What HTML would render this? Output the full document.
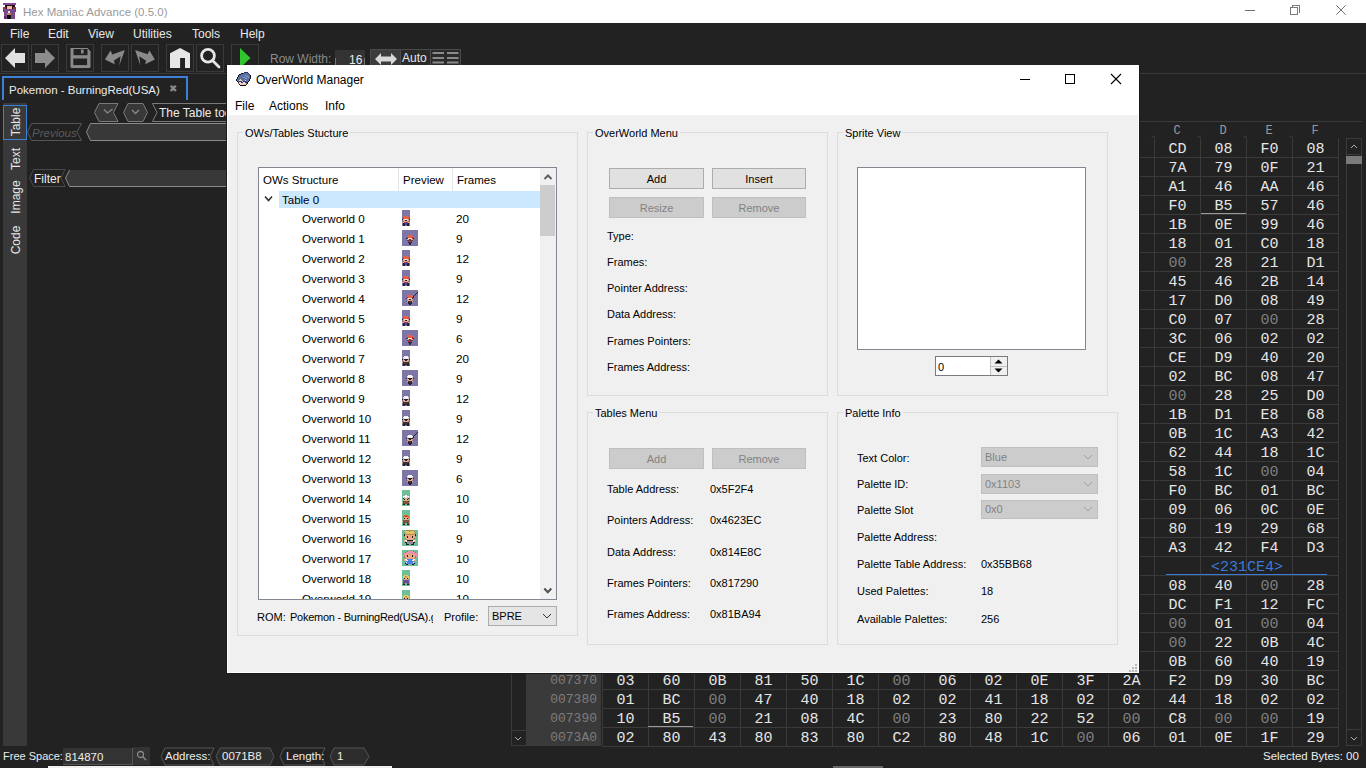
<!DOCTYPE html><html><head><meta charset="utf-8"><style>
html,body{margin:0;padding:0}
body{width:1366px;height:768px;overflow:hidden;position:relative;background:#222222;font-family:'Liberation Sans',sans-serif;font-size:12px}
div,span{box-sizing:border-box}
.hx{position:absolute;font-family:'Liberation Mono',monospace;font-size:15px;color:#e6e6e6;width:46px;text-align:center;height:19px;line-height:19px}
.z{color:#7f7f7f}
.ad{position:absolute;font-family:'Liberation Mono',monospace;font-size:13px;color:#7d7d7d;text-align:right;width:70px;height:19px;line-height:19px}

</style></head><body>
<div style="position:absolute;left:0px;top:0px;width:1366px;height:23px;background:#ffffff"></div>
<svg style="position:absolute;left:0;top:0" width="22" height="22" viewBox="0 0 22 22" shape-rendering="crispEdges">
<rect x="3" y="3" width="13" height="2" fill="#8a4a9a"/><rect x="5" y="5" width="10" height="4" fill="#1a1018"/>
<rect x="7" y="6" width="5" height="3" fill="#f0c0a0"/><rect x="3" y="7" width="3" height="5" fill="#b02848"/>
<rect x="13" y="7" width="3" height="5" fill="#b02848"/><rect x="4" y="9" width="11" height="10" fill="#7a4a8a"/>
<rect x="8" y="11" width="2" height="2" fill="#d8e8f0"/><rect x="7" y="13" width="4" height="2" fill="#c08060"/>
<rect x="7" y="15" width="4" height="4" fill="#101010"/><rect x="4" y="16" width="2" height="3" fill="#5a3068"/>
</svg>
<div style="position:absolute;left:23px;top:4px;height:16px;line-height:16px;white-space:nowrap;font-size:11.5px;color:#9a9a9a">Hex Maniac Advance (0.5.0)</div>
<div style="position:absolute;left:1245px;top:10px;width:10px;height:1px;background:#707070"></div>
<div style="position:absolute;left:1290px;top:7px;width:8px;height:8px;border:1px solid #7a7a7a"></div>
<div style="position:absolute;left:1292px;top:5px;width:8px;height:8px;border-top:1px solid #7a7a7a;border-right:1px solid #7a7a7a"></div>
<div style="position:absolute;left:1292px;top:5px;width:1px;height:2px;background:#7a7a7a"></div>
<svg style="position:absolute;left:1336px;top:5px" width="10" height="10"><path d="M0.3 0.3L9.7 9.7M9.7 0.3L0.3 9.7" stroke="#707070" stroke-width="1"/></svg>
<div style="position:absolute;left:10px;top:26px;height:16px;line-height:16px;white-space:nowrap;font-size:12px;color:#e8e8e8">File</div>
<div style="position:absolute;left:48px;top:26px;height:16px;line-height:16px;white-space:nowrap;font-size:12px;color:#e8e8e8">Edit</div>
<div style="position:absolute;left:88px;top:26px;height:16px;line-height:16px;white-space:nowrap;font-size:12px;color:#e8e8e8">View</div>
<div style="position:absolute;left:133px;top:26px;height:16px;line-height:16px;white-space:nowrap;font-size:12px;color:#e8e8e8">Utilities</div>
<div style="position:absolute;left:192px;top:26px;height:16px;line-height:16px;white-space:nowrap;font-size:12px;color:#e8e8e8">Tools</div>
<div style="position:absolute;left:240px;top:26px;height:16px;line-height:16px;white-space:nowrap;font-size:12px;color:#e8e8e8">Help</div>
<div style="position:absolute;left:1px;top:44px;width:28px;height:28px;border:1px solid #3a3a3a"></div>
<div style="position:absolute;left:31px;top:44px;width:28px;height:28px;border:1px solid #3a3a3a"></div>
<div style="position:absolute;left:66px;top:44px;width:28px;height:28px;border:1px solid #3a3a3a"></div>
<div style="position:absolute;left:101px;top:44px;width:28px;height:28px;border:1px solid #3a3a3a"></div>
<div style="position:absolute;left:131px;top:44px;width:28px;height:28px;border:1px solid #3a3a3a"></div>
<div style="position:absolute;left:166px;top:44px;width:28px;height:28px;border:1px solid #3a3a3a"></div>
<div style="position:absolute;left:196px;top:44px;width:28px;height:28px;border:1px solid #3a3a3a"></div>
<div style="position:absolute;left:231px;top:44px;width:28px;height:28px;border:1px solid #3a3a3a"></div>
<svg style="position:absolute;left:0;top:44px" width="262" height="28" viewBox="0 44 262 28">
<path d="M5 58 L15 48 L15 53 L25 53 L25 63 L15 63 L15 68 Z" fill="#e0e0e0"/>
<path d="M55 58 L45 48 L45 53 L35 53 L35 63 L45 63 L45 68 Z" fill="#8c8c8c"/>
<path d="M70.5 48 L87.5 48 L90.5 51.5 L90.5 66.5 Q90.5 68 89 68 L72 68 Q70.5 68 70.5 66.5 Z" fill="#8a8a8a"/>
<rect x="73.5" y="49" width="14" height="6.2" fill="#222"/><rect x="81" y="49.5" width="2.6" height="4" fill="#8a8a8a"/>
<rect x="73.3" y="58.5" width="13.8" height="6.6" fill="#222"/>
<path d="M105 59.4 L110.5 50.4 L112.3 54.5 L124.8 50.1 L119.3 65.5 L120.6 56.3 L114 60.5 L114.7 64.2 Z" fill="#8a8a8a"/>
<path d="M154.9 59.6 L149.4 50.4 L147.6 54.3 L135.1 50.1 L140.4 65.5 L139.3 56.3 L146.1 60.7 L145.2 64.2 Z" fill="#8a8a8a"/>
<path d="M170 53.2 L180.1 48 L190 53.2 L190 68 L185 68 L185 58 L180.1 58 L180.1 68 L170 68 Z" fill="#e6e6e6"/>
<circle cx="208" cy="55.7" r="6.4" stroke="#e6e6e6" stroke-width="2.8" fill="none"/>
<path d="M212.5 60.5 L219 67" stroke="#e6e6e6" stroke-width="2.8" stroke-linecap="round"/>
<path d="M240 48 L250.5 58 L240 68 Z" fill="#2ec52e"/>
</svg>
<div style="position:absolute;left:270px;top:51px;height:16px;line-height:16px;white-space:nowrap;font-size:12px;color:#8a8a8a">Row Width:</div>
<div style="position:absolute;left:335px;top:50px;width:30px;height:23px;background:#333333"></div>
<div style="position:absolute;left:335px;top:58px;width:1px;height:7px;background:#777"></div>
<div style="position:absolute;left:364px;top:58px;width:1px;height:7px;background:#777"></div>
<div style="position:absolute;left:349px;top:52px;height:16px;line-height:16px;white-space:nowrap;font-size:12px;color:#e8e8e8">16</div>
<div style="position:absolute;left:370px;top:49px;width:91px;height:24px;border:1px solid #4a4a4a;background:#2a2a2a"></div>
<div style="position:absolute;left:371px;top:50px;width:29px;height:23px;background:#3c3c3c"></div>
<div style="position:absolute;left:400px;top:49px;width:1px;height:23px;background:#4a4a4a"></div>
<div style="position:absolute;left:430px;top:49px;width:1px;height:23px;background:#4a4a4a"></div>
<svg style="position:absolute;left:374px;top:51px;" width="24" height="16" viewBox="0 0 24 16"><path d="M1 8 L7 2 L7 5.5 L17 5.5 L17 2 L23 8 L17 14 L17 10.5 L7 10.5 L7 14 Z" fill="#d8d8d8"/></svg>
<div style="position:absolute;left:402px;top:50px;height:16px;line-height:16px;white-space:nowrap;font-size:12px;color:#e8e8e8">Auto</div>
<svg style="position:absolute;left:430px;top:49px;" width="31" height="24" viewBox="0 0 31 24"><path d="M2.5 4H14M2.5 9H14M2.5 13.5H14M17 4H28.5M17 9H28.5M17 13.5H28.5" stroke="#8a8a8a" stroke-width="2"/></svg>
<div style="position:absolute;left:0px;top:73px;width:1366px;height:1px;background:#3a3a3a"></div>
<div style="position:absolute;left:2px;top:76px;width:186px;height:24px;border:2px solid #3b7fd6;border-bottom:none"></div>
<div style="position:absolute;left:9px;top:82px;height:16px;line-height:16px;white-space:nowrap;font-size:11.5px;color:#ececec">Pokemon - BurningRed(USA)</div>
<div style="position:absolute;left:169px;top:81px;height:16px;line-height:16px;white-space:nowrap;font-size:10px;color:#8a8a8a">&#x2716;</div>
<div style="position:absolute;left:189px;top:121px;width:1173px;height:1px;background:#3a3a3a"></div>
<div style="position:absolute;left:3px;top:103px;width:24px;height:643px;background:#393939"></div>
<div style="position:absolute;left:3px;top:105px;width:24px;height:35px;border:1px solid #3b7fd6;background:#3a3a3a"></div>
<div style="position:absolute;left:-24px;top:114px;width:80px;height:16px;line-height:16px;text-align:center;transform:rotate(-90deg);font-size:12px;color:#e6e6e6">Table</div>
<div style="position:absolute;left:-24px;top:151px;width:80px;height:16px;line-height:16px;text-align:center;transform:rotate(-90deg);font-size:12px;color:#e6e6e6">Text</div>
<div style="position:absolute;left:-24px;top:189px;width:80px;height:16px;line-height:16px;text-align:center;transform:rotate(-90deg);font-size:12px;color:#e6e6e6">Image</div>
<div style="position:absolute;left:-24px;top:232px;width:80px;height:16px;line-height:16px;text-align:center;transform:rotate(-90deg);font-size:12px;color:#e6e6e6">Code</div>
<svg style="position:absolute;left:94px;top:103px;" width="26" height="19" viewBox="0 0 26 19"><path d="M5 0.5 L24 0.5 L19.5 9.5 L24 18.5 L5 18.5 L0.5 9.5 Z" fill="#383838" stroke="#7a7a7a"/><path d="M10 6.5 L13.5 10 L18.5 6" stroke="#8a8a8a" stroke-width="1.3" fill="none"/></svg>
<svg style="position:absolute;left:123px;top:103px;" width="26" height="19" viewBox="0 0 26 19"><path d="M5 0.5 L20 0.5 L24.5 9.5 L20 18.5 L5 18.5 L0.5 9.5 Z" fill="#383838" stroke="#7a7a7a"/><path d="M9 7 L12.5 10.5 L16 7" stroke="#8a8a8a" stroke-width="1.3" fill="none"/></svg>
<svg style="position:absolute;left:152px;top:103px;" width="80" height="19" viewBox="0 0 80 19"><path d="M80 0.5 L0.5 0.5 L5 9.5 L0.5 18.5 L80 18.5" fill="#222" stroke="#7a7a7a"/></svg>
<div style="position:absolute;left:159px;top:105px;height:16px;line-height:16px;white-space:nowrap;font-size:12px;color:#ececec">The Table too</div>
<svg style="position:absolute;left:27px;top:123px;" width="56" height="19" viewBox="0 0 56 19"><path d="M4.5 0.5 L54.5 0.5 L50 9 L54.5 17.5 L4.5 17.5 L0.5 9 Z" fill="#222" stroke="#555"/></svg>
<div style="position:absolute;left:32px;top:125px;height:16px;line-height:16px;white-space:nowrap;font-size:11.5px;color:#5a5a5a;font-style:italic">Previous</div>
<svg style="position:absolute;left:86px;top:123px;" width="150" height="19" viewBox="0 0 150 19"><path d="M4.5 0.5 L150 0.5 L150 17.5 L4.5 17.5 L0.5 9 Z" fill="#383838" stroke="#8a8a8a"/></svg>
<svg style="position:absolute;left:29px;top:169px;" width="37" height="19" viewBox="0 0 37 19"><path d="M4.5 0.5 L36 0.5 L32 9 L36 17.5 L4.5 17.5 L0.5 9 Z" fill="#222" stroke="#4a4a4a"/></svg>
<div style="position:absolute;left:34px;top:171px;height:16px;line-height:16px;white-space:nowrap;font-size:12px;color:#ececec">Filter</div>
<svg style="position:absolute;left:65px;top:169px;" width="170" height="19" viewBox="0 0 170 19"><path d="M4.5 1 L170 1 L170 17.5 L4.5 17.5 L0.5 9 Z" fill="#383838"/><path d="M4.5 1 L0.5 9 L4.5 17.5 L170 17.5" fill="none" stroke="#8a8a8a"/></svg>
<div style="position:absolute;left:511px;top:138px;width:16px;height:608px;border:1px solid #3a3a3a;background:#222"></div>
<div style="position:absolute;left:511px;top:730px;width:16px;height:16px;border:1px solid #3a3a3a"></div>
<svg style="position:absolute;left:513px;top:733px;" width="10" height="10" viewBox="0 0 10 10"><path d="M2 4 L5 7 L8 4" stroke="#aaa" fill="none"/></svg>
<div style="position:absolute;left:527px;top:138px;width:74px;height:608px;background:#3a3a3a"></div>
<div style="position:absolute;left:602px;top:157px;width:736px;height:1px;background:#3a3a3a"></div>
<div style="position:absolute;left:602px;top:176px;width:736px;height:1px;background:#3a3a3a"></div>
<div style="position:absolute;left:602px;top:195px;width:736px;height:1px;background:#3a3a3a"></div>
<div style="position:absolute;left:602px;top:214px;width:736px;height:1px;background:#3a3a3a"></div>
<div style="position:absolute;left:602px;top:233px;width:736px;height:1px;background:#3a3a3a"></div>
<div style="position:absolute;left:602px;top:252px;width:736px;height:1px;background:#3a3a3a"></div>
<div style="position:absolute;left:602px;top:271px;width:736px;height:1px;background:#3a3a3a"></div>
<div style="position:absolute;left:602px;top:290px;width:736px;height:1px;background:#3a3a3a"></div>
<div style="position:absolute;left:602px;top:309px;width:736px;height:1px;background:#3a3a3a"></div>
<div style="position:absolute;left:602px;top:328px;width:736px;height:1px;background:#3a3a3a"></div>
<div style="position:absolute;left:602px;top:347px;width:736px;height:1px;background:#3a3a3a"></div>
<div style="position:absolute;left:602px;top:366px;width:736px;height:1px;background:#3a3a3a"></div>
<div style="position:absolute;left:602px;top:385px;width:736px;height:1px;background:#3a3a3a"></div>
<div style="position:absolute;left:602px;top:404px;width:736px;height:1px;background:#3a3a3a"></div>
<div style="position:absolute;left:602px;top:423px;width:736px;height:1px;background:#3a3a3a"></div>
<div style="position:absolute;left:602px;top:442px;width:736px;height:1px;background:#3a3a3a"></div>
<div style="position:absolute;left:602px;top:461px;width:736px;height:1px;background:#3a3a3a"></div>
<div style="position:absolute;left:602px;top:480px;width:736px;height:1px;background:#3a3a3a"></div>
<div style="position:absolute;left:602px;top:499px;width:736px;height:1px;background:#3a3a3a"></div>
<div style="position:absolute;left:602px;top:518px;width:736px;height:1px;background:#3a3a3a"></div>
<div style="position:absolute;left:602px;top:537px;width:736px;height:1px;background:#3a3a3a"></div>
<div style="position:absolute;left:602px;top:556px;width:736px;height:1px;background:#3a3a3a"></div>
<div style="position:absolute;left:602px;top:575px;width:736px;height:1px;background:#3a3a3a"></div>
<div style="position:absolute;left:602px;top:594px;width:736px;height:1px;background:#3a3a3a"></div>
<div style="position:absolute;left:602px;top:613px;width:736px;height:1px;background:#3a3a3a"></div>
<div style="position:absolute;left:602px;top:632px;width:736px;height:1px;background:#3a3a3a"></div>
<div style="position:absolute;left:602px;top:651px;width:736px;height:1px;background:#3a3a3a"></div>
<div style="position:absolute;left:602px;top:670px;width:736px;height:1px;background:#3a3a3a"></div>
<div style="position:absolute;left:602px;top:689px;width:736px;height:1px;background:#3a3a3a"></div>
<div style="position:absolute;left:602px;top:708px;width:736px;height:1px;background:#3a3a3a"></div>
<div style="position:absolute;left:602px;top:727px;width:736px;height:1px;background:#3a3a3a"></div>
<div style="position:absolute;left:602px;top:746px;width:736px;height:1px;background:#3a3a3a"></div>
<div style="position:absolute;left:602px;top:138px;width:1px;height:608px;background:#3a3a3a"></div>
<div style="position:absolute;left:648px;top:138px;width:1px;height:608px;background:#3a3a3a"></div>
<div style="position:absolute;left:694px;top:138px;width:1px;height:608px;background:#3a3a3a"></div>
<div style="position:absolute;left:740px;top:138px;width:1px;height:608px;background:#3a3a3a"></div>
<div style="position:absolute;left:786px;top:138px;width:1px;height:608px;background:#3a3a3a"></div>
<div style="position:absolute;left:832px;top:138px;width:1px;height:608px;background:#3a3a3a"></div>
<div style="position:absolute;left:878px;top:138px;width:1px;height:608px;background:#3a3a3a"></div>
<div style="position:absolute;left:924px;top:138px;width:1px;height:608px;background:#3a3a3a"></div>
<div style="position:absolute;left:970px;top:138px;width:1px;height:608px;background:#3a3a3a"></div>
<div style="position:absolute;left:1016px;top:138px;width:1px;height:608px;background:#3a3a3a"></div>
<div style="position:absolute;left:1062px;top:138px;width:1px;height:608px;background:#3a3a3a"></div>
<div style="position:absolute;left:1108px;top:138px;width:1px;height:608px;background:#3a3a3a"></div>
<div style="position:absolute;left:1154px;top:138px;width:1px;height:608px;background:#3a3a3a"></div>
<div style="position:absolute;left:1200px;top:138px;width:1px;height:608px;background:#3a3a3a"></div>
<div style="position:absolute;left:1246px;top:138px;width:1px;height:608px;background:#3a3a3a"></div>
<div style="position:absolute;left:1292px;top:138px;width:1px;height:608px;background:#3a3a3a"></div>
<div style="position:absolute;left:1338px;top:138px;width:1px;height:608px;background:#3a3a3a"></div>
<svg style="position:absolute;left:0;top:0" width="1366" height="150"><path d="M599.5 137.5 L603 136" stroke="#444" stroke-width="0.9" fill="none"/><path d="M645.5 137.5 L649 136" stroke="#444" stroke-width="0.9" fill="none"/><path d="M691.5 137.5 L695 136" stroke="#444" stroke-width="0.9" fill="none"/><path d="M737.5 137.5 L741 136" stroke="#444" stroke-width="0.9" fill="none"/><path d="M783.5 137.5 L787 136" stroke="#444" stroke-width="0.9" fill="none"/><path d="M829.5 137.5 L833 136" stroke="#444" stroke-width="0.9" fill="none"/><path d="M875.5 137.5 L879 136" stroke="#444" stroke-width="0.9" fill="none"/><path d="M921.5 137.5 L925 136" stroke="#444" stroke-width="0.9" fill="none"/><path d="M967.5 137.5 L971 136" stroke="#444" stroke-width="0.9" fill="none"/><path d="M1013.5 137.5 L1017 136" stroke="#444" stroke-width="0.9" fill="none"/><path d="M1059.5 137.5 L1063 136" stroke="#444" stroke-width="0.9" fill="none"/><path d="M1105.5 137.5 L1109 136" stroke="#444" stroke-width="0.9" fill="none"/><path d="M1151.5 137.5 L1155 136" stroke="#444" stroke-width="0.9" fill="none"/><path d="M1197.5 137.5 L1201 136" stroke="#444" stroke-width="0.9" fill="none"/><path d="M1243.5 137.5 L1247 136" stroke="#444" stroke-width="0.9" fill="none"/><path d="M1289.5 137.5 L1293 136" stroke="#444" stroke-width="0.9" fill="none"/></svg>
<div style="position:absolute;left:602px;top:123px;width:46px;height:17px;line-height:17px;text-align:center;font-family:'Liberation Mono', monospace;font-size:12px;color:#9a9a9a">0</div>
<div style="position:absolute;left:648px;top:123px;width:46px;height:17px;line-height:17px;text-align:center;font-family:'Liberation Mono', monospace;font-size:12px;color:#9a9a9a">1</div>
<div style="position:absolute;left:694px;top:123px;width:46px;height:17px;line-height:17px;text-align:center;font-family:'Liberation Mono', monospace;font-size:12px;color:#9a9a9a">2</div>
<div style="position:absolute;left:740px;top:123px;width:46px;height:17px;line-height:17px;text-align:center;font-family:'Liberation Mono', monospace;font-size:12px;color:#9a9a9a">3</div>
<div style="position:absolute;left:786px;top:123px;width:46px;height:17px;line-height:17px;text-align:center;font-family:'Liberation Mono', monospace;font-size:12px;color:#9a9a9a">4</div>
<div style="position:absolute;left:832px;top:123px;width:46px;height:17px;line-height:17px;text-align:center;font-family:'Liberation Mono', monospace;font-size:12px;color:#9a9a9a">5</div>
<div style="position:absolute;left:878px;top:123px;width:46px;height:17px;line-height:17px;text-align:center;font-family:'Liberation Mono', monospace;font-size:12px;color:#9a9a9a">6</div>
<div style="position:absolute;left:924px;top:123px;width:46px;height:17px;line-height:17px;text-align:center;font-family:'Liberation Mono', monospace;font-size:12px;color:#9a9a9a">7</div>
<div style="position:absolute;left:970px;top:123px;width:46px;height:17px;line-height:17px;text-align:center;font-family:'Liberation Mono', monospace;font-size:12px;color:#9a9a9a">8</div>
<div style="position:absolute;left:1016px;top:123px;width:46px;height:17px;line-height:17px;text-align:center;font-family:'Liberation Mono', monospace;font-size:12px;color:#9a9a9a">9</div>
<div style="position:absolute;left:1062px;top:123px;width:46px;height:17px;line-height:17px;text-align:center;font-family:'Liberation Mono', monospace;font-size:12px;color:#9a9a9a">A</div>
<div style="position:absolute;left:1108px;top:123px;width:46px;height:17px;line-height:17px;text-align:center;font-family:'Liberation Mono', monospace;font-size:12px;color:#9a9a9a">B</div>
<div style="position:absolute;left:1154px;top:123px;width:46px;height:17px;line-height:17px;text-align:center;font-family:'Liberation Mono', monospace;font-size:12px;color:#9a9a9a">C</div>
<div style="position:absolute;left:1200px;top:123px;width:46px;height:17px;line-height:17px;text-align:center;font-family:'Liberation Mono', monospace;font-size:12px;color:#9a9a9a">D</div>
<div style="position:absolute;left:1246px;top:123px;width:46px;height:17px;line-height:17px;text-align:center;font-family:'Liberation Mono', monospace;font-size:12px;color:#9a9a9a">E</div>
<div style="position:absolute;left:1292px;top:123px;width:46px;height:17px;line-height:17px;text-align:center;font-family:'Liberation Mono', monospace;font-size:12px;color:#9a9a9a">F</div>
<div class="ad" style="left:527px;top:139px">0071B0</div>
<div class="hx" style="left:1154.5px;top:140px">CD</div>
<div class="hx" style="left:1200.5px;top:140px">08</div>
<div class="hx" style="left:1246.5px;top:140px">F0</div>
<div class="hx" style="left:1292.5px;top:140px">08</div>
<div class="ad" style="left:527px;top:158px">0071C0</div>
<div class="hx" style="left:1154.5px;top:159px">7A</div>
<div class="hx" style="left:1200.5px;top:159px">79</div>
<div class="hx" style="left:1246.5px;top:159px">0F</div>
<div class="hx" style="left:1292.5px;top:159px">21</div>
<div class="ad" style="left:527px;top:177px">0071D0</div>
<div class="hx" style="left:1154.5px;top:178px">A1</div>
<div class="hx" style="left:1200.5px;top:178px">46</div>
<div class="hx" style="left:1246.5px;top:178px">AA</div>
<div class="hx" style="left:1292.5px;top:178px">46</div>
<div class="ad" style="left:527px;top:196px">0071E0</div>
<div class="hx" style="left:1154.5px;top:197px">F0</div>
<div class="hx" style="left:1200.5px;top:197px">B5</div>
<div class="hx" style="left:1246.5px;top:197px">57</div>
<div class="hx" style="left:1292.5px;top:197px">46</div>
<div class="ad" style="left:527px;top:215px">0071F0</div>
<div class="hx" style="left:1154.5px;top:216px">1B</div>
<div class="hx" style="left:1200.5px;top:216px">0E</div>
<div class="hx" style="left:1246.5px;top:216px">99</div>
<div class="hx" style="left:1292.5px;top:216px">46</div>
<div class="ad" style="left:527px;top:234px">007200</div>
<div class="hx" style="left:1154.5px;top:235px">18</div>
<div class="hx" style="left:1200.5px;top:235px">01</div>
<div class="hx" style="left:1246.5px;top:235px">C0</div>
<div class="hx" style="left:1292.5px;top:235px">18</div>
<div class="ad" style="left:527px;top:253px">007210</div>
<div class="hx z" style="left:1154.5px;top:254px">00</div>
<div class="hx" style="left:1200.5px;top:254px">28</div>
<div class="hx" style="left:1246.5px;top:254px">21</div>
<div class="hx" style="left:1292.5px;top:254px">D1</div>
<div class="ad" style="left:527px;top:272px">007220</div>
<div class="hx" style="left:1154.5px;top:273px">45</div>
<div class="hx" style="left:1200.5px;top:273px">46</div>
<div class="hx" style="left:1246.5px;top:273px">2B</div>
<div class="hx" style="left:1292.5px;top:273px">14</div>
<div class="ad" style="left:527px;top:291px">007230</div>
<div class="hx" style="left:1154.5px;top:292px">17</div>
<div class="hx" style="left:1200.5px;top:292px">D0</div>
<div class="hx" style="left:1246.5px;top:292px">08</div>
<div class="hx" style="left:1292.5px;top:292px">49</div>
<div class="ad" style="left:527px;top:310px">007240</div>
<div class="hx" style="left:1154.5px;top:311px">C0</div>
<div class="hx" style="left:1200.5px;top:311px">07</div>
<div class="hx z" style="left:1246.5px;top:311px">00</div>
<div class="hx" style="left:1292.5px;top:311px">28</div>
<div class="ad" style="left:527px;top:329px">007250</div>
<div class="hx" style="left:1154.5px;top:330px">3C</div>
<div class="hx" style="left:1200.5px;top:330px">06</div>
<div class="hx" style="left:1246.5px;top:330px">02</div>
<div class="hx" style="left:1292.5px;top:330px">02</div>
<div class="ad" style="left:527px;top:348px">007260</div>
<div class="hx" style="left:1154.5px;top:349px">CE</div>
<div class="hx" style="left:1200.5px;top:349px">D9</div>
<div class="hx" style="left:1246.5px;top:349px">40</div>
<div class="hx" style="left:1292.5px;top:349px">20</div>
<div class="ad" style="left:527px;top:367px">007270</div>
<div class="hx" style="left:1154.5px;top:368px">02</div>
<div class="hx" style="left:1200.5px;top:368px">BC</div>
<div class="hx" style="left:1246.5px;top:368px">08</div>
<div class="hx" style="left:1292.5px;top:368px">47</div>
<div class="ad" style="left:527px;top:386px">007280</div>
<div class="hx z" style="left:1154.5px;top:387px">00</div>
<div class="hx" style="left:1200.5px;top:387px">28</div>
<div class="hx" style="left:1246.5px;top:387px">25</div>
<div class="hx" style="left:1292.5px;top:387px">D0</div>
<div class="ad" style="left:527px;top:405px">007290</div>
<div class="hx" style="left:1154.5px;top:406px">1B</div>
<div class="hx" style="left:1200.5px;top:406px">D1</div>
<div class="hx" style="left:1246.5px;top:406px">E8</div>
<div class="hx" style="left:1292.5px;top:406px">68</div>
<div class="ad" style="left:527px;top:424px">0072A0</div>
<div class="hx" style="left:1154.5px;top:425px">0B</div>
<div class="hx" style="left:1200.5px;top:425px">1C</div>
<div class="hx" style="left:1246.5px;top:425px">A3</div>
<div class="hx" style="left:1292.5px;top:425px">42</div>
<div class="ad" style="left:527px;top:443px">0072B0</div>
<div class="hx" style="left:1154.5px;top:444px">62</div>
<div class="hx" style="left:1200.5px;top:444px">44</div>
<div class="hx" style="left:1246.5px;top:444px">18</div>
<div class="hx" style="left:1292.5px;top:444px">1C</div>
<div class="ad" style="left:527px;top:462px">0072C0</div>
<div class="hx" style="left:1154.5px;top:463px">58</div>
<div class="hx" style="left:1200.5px;top:463px">1C</div>
<div class="hx z" style="left:1246.5px;top:463px">00</div>
<div class="hx" style="left:1292.5px;top:463px">04</div>
<div class="ad" style="left:527px;top:481px">0072D0</div>
<div class="hx" style="left:1154.5px;top:482px">F0</div>
<div class="hx" style="left:1200.5px;top:482px">BC</div>
<div class="hx" style="left:1246.5px;top:482px">01</div>
<div class="hx" style="left:1292.5px;top:482px">BC</div>
<div class="ad" style="left:527px;top:500px">0072E0</div>
<div class="hx" style="left:1154.5px;top:501px">09</div>
<div class="hx" style="left:1200.5px;top:501px">06</div>
<div class="hx" style="left:1246.5px;top:501px">0C</div>
<div class="hx" style="left:1292.5px;top:501px">0E</div>
<div class="ad" style="left:527px;top:519px">0072F0</div>
<div class="hx" style="left:1154.5px;top:520px">80</div>
<div class="hx" style="left:1200.5px;top:520px">19</div>
<div class="hx" style="left:1246.5px;top:520px">29</div>
<div class="hx" style="left:1292.5px;top:520px">68</div>
<div class="ad" style="left:527px;top:538px">007300</div>
<div class="hx" style="left:1154.5px;top:539px">A3</div>
<div class="hx" style="left:1200.5px;top:539px">42</div>
<div class="hx" style="left:1246.5px;top:539px">F4</div>
<div class="hx" style="left:1292.5px;top:539px">D3</div>
<div class="ad" style="left:527px;top:557px">007310</div>
<div style="position:absolute;left:1165px;top:558px;width:164px;height:19px;line-height:19px;text-align:center;font-family:'Liberation Mono', monospace;font-size:15px;color:#3a7ad8">&lt;231CE4&gt;</div>
<div style="position:absolute;left:1166px;top:574px;width:161px;height:1px;background:#3a7ad8"></div>
<div class="ad" style="left:527px;top:576px">007320</div>
<div class="hx" style="left:1154.5px;top:577px">08</div>
<div class="hx" style="left:1200.5px;top:577px">40</div>
<div class="hx z" style="left:1246.5px;top:577px">00</div>
<div class="hx" style="left:1292.5px;top:577px">28</div>
<div class="ad" style="left:527px;top:595px">007330</div>
<div class="hx" style="left:1154.5px;top:596px">DC</div>
<div class="hx" style="left:1200.5px;top:596px">F1</div>
<div class="hx" style="left:1246.5px;top:596px">12</div>
<div class="hx" style="left:1292.5px;top:596px">FC</div>
<div class="ad" style="left:527px;top:614px">007340</div>
<div class="hx z" style="left:1154.5px;top:615px">00</div>
<div class="hx" style="left:1200.5px;top:615px">01</div>
<div class="hx z" style="left:1246.5px;top:615px">00</div>
<div class="hx" style="left:1292.5px;top:615px">04</div>
<div class="ad" style="left:527px;top:633px">007350</div>
<div class="hx z" style="left:1154.5px;top:634px">00</div>
<div class="hx" style="left:1200.5px;top:634px">22</div>
<div class="hx" style="left:1246.5px;top:634px">0B</div>
<div class="hx" style="left:1292.5px;top:634px">4C</div>
<div class="ad" style="left:527px;top:652px">007360</div>
<div class="hx" style="left:1154.5px;top:653px">0B</div>
<div class="hx" style="left:1200.5px;top:653px">60</div>
<div class="hx" style="left:1246.5px;top:653px">40</div>
<div class="hx" style="left:1292.5px;top:653px">19</div>
<div class="ad" style="left:527px;top:671px">007370</div>
<div class="hx" style="left:602.5px;top:672px">03</div>
<div class="hx" style="left:648.5px;top:672px">60</div>
<div class="hx" style="left:694.5px;top:672px">0B</div>
<div class="hx" style="left:740.5px;top:672px">81</div>
<div class="hx" style="left:786.5px;top:672px">50</div>
<div class="hx" style="left:832.5px;top:672px">1C</div>
<div class="hx z" style="left:878.5px;top:672px">00</div>
<div class="hx" style="left:924.5px;top:672px">06</div>
<div class="hx" style="left:970.5px;top:672px">02</div>
<div class="hx" style="left:1016.5px;top:672px">0E</div>
<div class="hx" style="left:1062.5px;top:672px">3F</div>
<div class="hx" style="left:1108.5px;top:672px">2A</div>
<div class="hx" style="left:1154.5px;top:672px">F2</div>
<div class="hx" style="left:1200.5px;top:672px">D9</div>
<div class="hx" style="left:1246.5px;top:672px">30</div>
<div class="hx" style="left:1292.5px;top:672px">BC</div>
<div class="ad" style="left:527px;top:690px">007380</div>
<div class="hx" style="left:602.5px;top:691px">01</div>
<div class="hx" style="left:648.5px;top:691px">BC</div>
<div class="hx z" style="left:694.5px;top:691px">00</div>
<div class="hx" style="left:740.5px;top:691px">47</div>
<div class="hx" style="left:786.5px;top:691px">40</div>
<div class="hx" style="left:832.5px;top:691px">18</div>
<div class="hx" style="left:878.5px;top:691px">02</div>
<div class="hx" style="left:924.5px;top:691px">02</div>
<div class="hx" style="left:970.5px;top:691px">41</div>
<div class="hx" style="left:1016.5px;top:691px">18</div>
<div class="hx" style="left:1062.5px;top:691px">02</div>
<div class="hx" style="left:1108.5px;top:691px">02</div>
<div class="hx" style="left:1154.5px;top:691px">44</div>
<div class="hx" style="left:1200.5px;top:691px">18</div>
<div class="hx" style="left:1246.5px;top:691px">02</div>
<div class="hx" style="left:1292.5px;top:691px">02</div>
<div class="ad" style="left:527px;top:709px">007390</div>
<div class="hx" style="left:602.5px;top:710px">10</div>
<div class="hx" style="left:648.5px;top:710px">B5</div>
<div class="hx z" style="left:694.5px;top:710px">00</div>
<div class="hx" style="left:740.5px;top:710px">21</div>
<div class="hx" style="left:786.5px;top:710px">08</div>
<div class="hx" style="left:832.5px;top:710px">4C</div>
<div class="hx z" style="left:878.5px;top:710px">00</div>
<div class="hx" style="left:924.5px;top:710px">23</div>
<div class="hx" style="left:970.5px;top:710px">80</div>
<div class="hx" style="left:1016.5px;top:710px">22</div>
<div class="hx" style="left:1062.5px;top:710px">52</div>
<div class="hx z" style="left:1108.5px;top:710px">00</div>
<div class="hx" style="left:1154.5px;top:710px">C8</div>
<div class="hx z" style="left:1200.5px;top:710px">00</div>
<div class="hx z" style="left:1246.5px;top:710px">00</div>
<div class="hx" style="left:1292.5px;top:710px">19</div>
<div class="ad" style="left:527px;top:728px">0073A0</div>
<div class="hx" style="left:602.5px;top:729px">02</div>
<div class="hx" style="left:648.5px;top:729px">80</div>
<div class="hx" style="left:694.5px;top:729px">43</div>
<div class="hx" style="left:740.5px;top:729px">80</div>
<div class="hx" style="left:786.5px;top:729px">83</div>
<div class="hx" style="left:832.5px;top:729px">80</div>
<div class="hx" style="left:878.5px;top:729px">C2</div>
<div class="hx" style="left:924.5px;top:729px">80</div>
<div class="hx" style="left:970.5px;top:729px">48</div>
<div class="hx" style="left:1016.5px;top:729px">1C</div>
<div class="hx z" style="left:1062.5px;top:729px">00</div>
<div class="hx" style="left:1108.5px;top:729px">06</div>
<div class="hx" style="left:1154.5px;top:729px">01</div>
<div class="hx" style="left:1200.5px;top:729px">0E</div>
<div class="hx" style="left:1246.5px;top:729px">1F</div>
<div class="hx" style="left:1292.5px;top:729px">29</div>
<div style="position:absolute;left:1201px;top:213px;width:45px;height:1px;background:#9a9a9a"></div>
<div style="position:absolute;left:648px;top:726px;width:45px;height:1px;background:#9a9a9a"></div>
<div style="position:absolute;left:1346px;top:138px;width:16px;height:608px;border:1px solid #3a3a3a"></div>
<div style="position:absolute;left:1346px;top:138px;width:16px;height:17px;border:1px solid #3a3a3a"></div>
<svg style="position:absolute;left:1349px;top:142px;" width="10" height="10" viewBox="0 0 10 10"><path d="M2 6 L5 3 L8 6" stroke="#aaa" fill="none"/></svg>
<div style="position:absolute;left:1346px;top:156px;width:16px;height:8px;background:#7a7a7a"></div>
<div style="position:absolute;left:1346px;top:729px;width:16px;height:17px;border:1px solid #3a3a3a"></div>
<svg style="position:absolute;left:1349px;top:733px;" width="10" height="10" viewBox="0 0 10 10"><path d="M2 4 L5 7 L8 4" stroke="#aaa" fill="none"/></svg>
<div style="position:absolute;left:3px;top:748px;height:16px;line-height:16px;white-space:nowrap;font-size:11px;color:#ececec">Free Space:</div>
<div style="position:absolute;left:63px;top:748px;width:70px;height:17px;background:#333;border-right:1px solid #555;border-bottom:1px solid #555"></div>
<div style="position:absolute;left:65px;top:749px;height:16px;line-height:16px;white-space:nowrap;font-size:11.5px;color:#ececec">814870</div>
<div style="position:absolute;left:133px;top:747px;width:17px;height:18px;background:#333"></div>
<svg style="position:absolute;left:136px;top:750px;" width="11" height="11" viewBox="0 0 11 11"><circle cx="4.5" cy="4.5" r="3" stroke="#888" stroke-width="1.3" fill="none"/><path d="M7 7 L10 10" stroke="#888" stroke-width="1.5"/></svg>
<svg style="position:absolute;left:160px;top:747px;" width="55" height="19" viewBox="0 0 55 19"><path d="M5 1 L54 1 L50 9.5 L54 18 L5 18 L1 9.5 Z" fill="#222" stroke="#555"/></svg>
<div style="position:absolute;left:165px;top:748px;height:16px;line-height:16px;white-space:nowrap;font-size:11.5px;color:#ececec">Address:</div>
<svg style="position:absolute;left:215px;top:747px;" width="60" height="19" viewBox="0 0 60 19"><path d="M5 1 L55 1 L59 9.5 L55 18 L5 18 L1 9.5 Z" fill="#2d2d2d" stroke="#555"/></svg>
<div style="position:absolute;left:222px;top:748px;height:16px;line-height:16px;white-space:nowrap;font-size:11.5px;color:#ececec">0071B8</div>
<svg style="position:absolute;left:279px;top:747px;" width="47" height="19" viewBox="0 0 47 19"><path d="M5 1 L46 1 L42 9.5 L46 18 L5 18 L1 9.5 Z" fill="#222" stroke="#555"/></svg>
<div style="position:absolute;left:286px;top:748px;height:16px;line-height:16px;white-space:nowrap;font-size:11.5px;color:#ececec">Length:</div>
<svg style="position:absolute;left:329px;top:747px;" width="41" height="19" viewBox="0 0 41 19"><path d="M5 1 L35 1 L40 9.5 L35 18 L5 18 L1 9.5 Z" fill="#2d2d2d" stroke="#555"/></svg>
<div style="position:absolute;left:337px;top:748px;height:16px;line-height:16px;white-space:nowrap;font-size:11.5px;color:#ececec">1</div>
<div style="position:absolute;left:1263px;top:748px;height:16px;line-height:16px;white-space:nowrap;font-size:11.5px;color:#ececec">Selected Bytes: 00</div>
<div style="position:absolute;left:48px;top:766px;width:344px;height:2px;background:#f0f0f0"></div>
<div style="position:absolute;left:833px;top:766px;width:50px;height:2px;background:#666"></div>
<div style="position:absolute;left:226px;top:65px;width:914px;height:609px;background:#1a1a1a"></div>
<div style="position:absolute;left:227px;top:65px;width:912px;height:608px;background:#f0f0f0;border:1px solid #ffffff"></div>
<div style="position:absolute;left:227px;top:65px;width:912px;height:50px;background:#ffffff"></div>
<svg style="position:absolute;left:235px;top:72px" width="16" height="14" viewBox="0 0 16 14" shape-rendering="crispEdges"><rect x="9" y="0" width="1" height="1" fill="#283878"/><rect x="10" y="0" width="1" height="1" fill="#283878"/><rect x="11" y="0" width="1" height="1" fill="#283878"/><rect x="12" y="0" width="1" height="1" fill="#283878"/><rect x="6" y="1" width="1" height="1" fill="#101018"/><rect x="7" y="1" width="1" height="1" fill="#101018"/><rect x="8" y="1" width="1" height="1" fill="#283878"/><rect x="9" y="1" width="1" height="1" fill="#5a72a2"/><rect x="10" y="1" width="1" height="1" fill="#5a72a2"/><rect x="11" y="1" width="1" height="1" fill="#5a72a2"/><rect x="12" y="1" width="1" height="1" fill="#5a72a2"/><rect x="13" y="1" width="1" height="1" fill="#283878"/><rect x="4" y="2" width="1" height="1" fill="#101018"/><rect x="5" y="2" width="1" height="1" fill="#101018"/><rect x="6" y="2" width="1" height="1" fill="#5a72a2"/><rect x="7" y="2" width="1" height="1" fill="#5a72a2"/><rect x="8" y="2" width="1" height="1" fill="#5a72a2"/><rect x="9" y="2" width="1" height="1" fill="#5a72a2"/><rect x="10" y="2" width="1" height="1" fill="#5a72a2"/><rect x="11" y="2" width="1" height="1" fill="#5a72a2"/><rect x="12" y="2" width="1" height="1" fill="#5a72a2"/><rect x="13" y="2" width="1" height="1" fill="#5a72a2"/><rect x="14" y="2" width="1" height="1" fill="#283878"/><rect x="3" y="3" width="1" height="1" fill="#101018"/><rect x="4" y="3" width="1" height="1" fill="#5a72a2"/><rect x="5" y="3" width="1" height="1" fill="#5a72a2"/><rect x="6" y="3" width="1" height="1" fill="#5a72a2"/><rect x="7" y="3" width="1" height="1" fill="#5a72a2"/><rect x="8" y="3" width="1" height="1" fill="#5a72a2"/><rect x="9" y="3" width="1" height="1" fill="#5a72a2"/><rect x="10" y="3" width="1" height="1" fill="#8aa0c8"/><rect x="11" y="3" width="1" height="1" fill="#5a72a2"/><rect x="12" y="3" width="1" height="1" fill="#5a72a2"/><rect x="13" y="3" width="1" height="1" fill="#5a72a2"/><rect x="14" y="3" width="1" height="1" fill="#5a72a2"/><rect x="15" y="3" width="1" height="1" fill="#101018"/><rect x="3" y="4" width="1" height="1" fill="#101018"/><rect x="4" y="4" width="1" height="1" fill="#5a72a2"/><rect x="5" y="4" width="1" height="1" fill="#5a72a2"/><rect x="6" y="4" width="1" height="1" fill="#5a72a2"/><rect x="7" y="4" width="1" height="1" fill="#5a72a2"/><rect x="8" y="4" width="1" height="1" fill="#5a72a2"/><rect x="9" y="4" width="1" height="1" fill="#5a72a2"/><rect x="10" y="4" width="1" height="1" fill="#5a72a2"/><rect x="11" y="4" width="1" height="1" fill="#8aa0c8"/><rect x="12" y="4" width="1" height="1" fill="#8aa0c8"/><rect x="13" y="4" width="1" height="1" fill="#5a72a2"/><rect x="14" y="4" width="1" height="1" fill="#5a72a2"/><rect x="15" y="4" width="1" height="1" fill="#101018"/><rect x="2" y="5" width="1" height="1" fill="#101018"/><rect x="3" y="5" width="1" height="1" fill="#5a72a2"/><rect x="4" y="5" width="1" height="1" fill="#5a72a2"/><rect x="5" y="5" width="1" height="1" fill="#5a72a2"/><rect x="6" y="5" width="1" height="1" fill="#5a72a2"/><rect x="7" y="5" width="1" height="1" fill="#5a72a2"/><rect x="8" y="5" width="1" height="1" fill="#8aa0c8"/><rect x="9" y="5" width="1" height="1" fill="#8aa0c8"/><rect x="10" y="5" width="1" height="1" fill="#5a72a2"/><rect x="11" y="5" width="1" height="1" fill="#5a72a2"/><rect x="12" y="5" width="1" height="1" fill="#5a72a2"/><rect x="13" y="5" width="1" height="1" fill="#8aa0c8"/><rect x="14" y="5" width="1" height="1" fill="#5a72a2"/><rect x="15" y="5" width="1" height="1" fill="#101018"/><rect x="2" y="6" width="1" height="1" fill="#101018"/><rect x="3" y="6" width="1" height="1" fill="#5a72a2"/><rect x="4" y="6" width="1" height="1" fill="#5a72a2"/><rect x="5" y="6" width="1" height="1" fill="#5a72a2"/><rect x="6" y="6" width="1" height="1" fill="#5a72a2"/><rect x="7" y="6" width="1" height="1" fill="#5a72a2"/><rect x="8" y="6" width="1" height="1" fill="#5a72a2"/><rect x="9" y="6" width="1" height="1" fill="#5a72a2"/><rect x="10" y="6" width="1" height="1" fill="#8aa0c8"/><rect x="11" y="6" width="1" height="1" fill="#8aa0c8"/><rect x="12" y="6" width="1" height="1" fill="#5a72a2"/><rect x="13" y="6" width="1" height="1" fill="#5a72a2"/><rect x="14" y="6" width="1" height="1" fill="#5a72a2"/><rect x="15" y="6" width="1" height="1" fill="#101018"/><rect x="1" y="7" width="1" height="1" fill="#101018"/><rect x="2" y="7" width="1" height="1" fill="#5a72a2"/><rect x="3" y="7" width="1" height="1" fill="#5a72a2"/><rect x="4" y="7" width="1" height="1" fill="#5a72a2"/><rect x="5" y="7" width="1" height="1" fill="#f8c8a0"/><rect x="6" y="7" width="1" height="1" fill="#5a72a2"/><rect x="7" y="7" width="1" height="1" fill="#5a72a2"/><rect x="8" y="7" width="1" height="1" fill="#5a72a2"/><rect x="9" y="7" width="1" height="1" fill="#5a72a2"/><rect x="10" y="7" width="1" height="1" fill="#5a72a2"/><rect x="11" y="7" width="1" height="1" fill="#5a72a2"/><rect x="12" y="7" width="1" height="1" fill="#5a72a2"/><rect x="13" y="7" width="1" height="1" fill="#5a72a2"/><rect x="14" y="7" width="1" height="1" fill="#101018"/><rect x="1" y="8" width="1" height="1" fill="#101018"/><rect x="2" y="8" width="1" height="1" fill="#5a72a2"/><rect x="3" y="8" width="1" height="1" fill="#5a72a2"/><rect x="4" y="8" width="1" height="1" fill="#f8c8a0"/><rect x="5" y="8" width="1" height="1" fill="#f8c8a0"/><rect x="6" y="8" width="1" height="1" fill="#f8c8a0"/><rect x="7" y="8" width="1" height="1" fill="#5a72a2"/><rect x="8" y="8" width="1" height="1" fill="#5a72a2"/><rect x="9" y="8" width="1" height="1" fill="#5a72a2"/><rect x="10" y="8" width="1" height="1" fill="#f8c8a0"/><rect x="11" y="8" width="1" height="1" fill="#5a72a2"/><rect x="12" y="8" width="1" height="1" fill="#5a72a2"/><rect x="13" y="8" width="1" height="1" fill="#5a72a2"/><rect x="14" y="8" width="1" height="1" fill="#101018"/><rect x="2" y="9" width="1" height="1" fill="#101018"/><rect x="3" y="9" width="1" height="1" fill="#5a72a2"/><rect x="4" y="9" width="1" height="1" fill="#283878"/><rect x="5" y="9" width="1" height="1" fill="#283878"/><rect x="6" y="9" width="1" height="1" fill="#283878"/><rect x="7" y="9" width="1" height="1" fill="#f8c8a0"/><rect x="8" y="9" width="1" height="1" fill="#283878"/><rect x="9" y="9" width="1" height="1" fill="#283878"/><rect x="10" y="9" width="1" height="1" fill="#283878"/><rect x="11" y="9" width="1" height="1" fill="#5a72a2"/><rect x="12" y="9" width="1" height="1" fill="#5a72a2"/><rect x="13" y="9" width="1" height="1" fill="#101018"/><rect x="3" y="10" width="1" height="1" fill="#101018"/><rect x="4" y="10" width="1" height="1" fill="#d8e0f4"/><rect x="5" y="10" width="1" height="1" fill="#d8e0f4"/><rect x="6" y="10" width="1" height="1" fill="#283878"/><rect x="7" y="10" width="1" height="1" fill="#283878"/><rect x="8" y="10" width="1" height="1" fill="#d8e0f4"/><rect x="9" y="10" width="1" height="1" fill="#d8e0f4"/><rect x="10" y="10" width="1" height="1" fill="#283878"/><rect x="11" y="10" width="1" height="1" fill="#283878"/><rect x="12" y="10" width="1" height="1" fill="#101018"/><rect x="3" y="11" width="1" height="1" fill="#c07050"/><rect x="4" y="11" width="1" height="1" fill="#f8c8a0"/><rect x="5" y="11" width="1" height="1" fill="#d8e0f4"/><rect x="6" y="11" width="1" height="1" fill="#f8c8a0"/><rect x="7" y="11" width="1" height="1" fill="#f8c8a0"/><rect x="8" y="11" width="1" height="1" fill="#f8c8a0"/><rect x="9" y="11" width="1" height="1" fill="#d8e0f4"/><rect x="10" y="11" width="1" height="1" fill="#f8c8a0"/><rect x="11" y="11" width="1" height="1" fill="#c07050"/><rect x="12" y="11" width="1" height="1" fill="#101018"/><rect x="4" y="12" width="1" height="1" fill="#101018"/><rect x="5" y="12" width="1" height="1" fill="#f8c8a0"/><rect x="6" y="12" width="1" height="1" fill="#f8c8a0"/><rect x="7" y="12" width="1" height="1" fill="#f8c8a0"/><rect x="8" y="12" width="1" height="1" fill="#f8c8a0"/><rect x="9" y="12" width="1" height="1" fill="#f8c8a0"/><rect x="10" y="12" width="1" height="1" fill="#f8c8a0"/><rect x="11" y="12" width="1" height="1" fill="#101018"/><rect x="5" y="13" width="1" height="1" fill="#101018"/><rect x="6" y="13" width="1" height="1" fill="#101018"/><rect x="7" y="13" width="1" height="1" fill="#101018"/><rect x="8" y="13" width="1" height="1" fill="#101018"/><rect x="9" y="13" width="1" height="1" fill="#101018"/><rect x="10" y="13" width="1" height="1" fill="#101018"/></svg>
<div style="position:absolute;left:256px;top:72px;height:16px;line-height:16px;white-space:nowrap;font-size:12px;color:#000">OverWorld Manager</div>
<div style="position:absolute;left:1020px;top:79px;width:10px;height:1px;background:#000"></div>
<div style="position:absolute;left:1065px;top:74px;width:10px;height:10px;border:1px solid #000"></div>
<svg style="position:absolute;left:1110px;top:73px;" width="12" height="12" viewBox="0 0 12 12"><path d="M1 1 L11 11 M11 1 L1 11" stroke="#000" stroke-width="1.1"/></svg>
<div style="position:absolute;left:235px;top:98px;height:16px;line-height:16px;white-space:nowrap;font-size:12px;color:#000">File</div>
<div style="position:absolute;left:269px;top:98px;height:16px;line-height:16px;white-space:nowrap;font-size:12px;color:#000">Actions</div>
<div style="position:absolute;left:325px;top:98px;height:16px;line-height:16px;white-space:nowrap;font-size:12px;color:#000">Info</div>
<div style="position:absolute;left:237px;top:132px;width:341px;height:504px;border:1px solid #dcdcdc"></div>
<div style="position:absolute;left:243px;top:125px;height:16px;line-height:16px;padding:0 2px;background:#f0f0f0;white-space:nowrap;font-size:11px;color:#000">OWs/Tables Stucture</div>
<div style="position:absolute;left:258px;top:167px;width:299px;height:433px;background:#fff;border:1px solid #828790"></div>
<div style="position:absolute;left:398px;top:168px;width:1px;height:23px;background:#e5e5e5"></div>
<div style="position:absolute;left:452px;top:168px;width:1px;height:23px;background:#e5e5e5"></div>
<div style="position:absolute;left:263px;top:172px;height:16px;line-height:16px;white-space:nowrap;font-size:11.5px;color:#000">OWs Structure</div>
<div style="position:absolute;left:403px;top:172px;height:16px;line-height:16px;white-space:nowrap;font-size:11.5px;color:#000">Preview</div>
<div style="position:absolute;left:457px;top:172px;height:16px;line-height:16px;white-space:nowrap;font-size:11.5px;color:#000">Frames</div>
<div style="position:absolute;left:279px;top:191px;width:261px;height:17px;background:#cce8ff"></div>
<svg style="position:absolute;left:264px;top:195px;" width="10" height="8" viewBox="0 0 10 8"><path d="M1 1.5 L4.5 5.5 L8 1.5" stroke="#333" stroke-width="1.6" fill="none"/></svg>
<div style="position:absolute;left:282px;top:192px;height:16px;line-height:16px;white-space:nowrap;font-size:11.5px;color:#000">Table 0</div>
<div style="position:absolute;left:259px;top:208px;width:280px;height:391px;overflow:hidden">
<div style="position:absolute;left:43px;top:3px;height:16px;line-height:16px;white-space:nowrap;font-size:11.65px;color:#000">Overworld 0</div>
<div style="position:absolute;left:197px;top:3px;height:16px;line-height:16px;white-space:nowrap;font-size:11.65px;color:#000">20</div>
<div style="position:absolute;left:43px;top:23px;height:16px;line-height:16px;white-space:nowrap;font-size:11.65px;color:#000">Overworld 1</div>
<div style="position:absolute;left:197px;top:23px;height:16px;line-height:16px;white-space:nowrap;font-size:11.65px;color:#000">9</div>
<div style="position:absolute;left:43px;top:43px;height:16px;line-height:16px;white-space:nowrap;font-size:11.65px;color:#000">Overworld 2</div>
<div style="position:absolute;left:197px;top:43px;height:16px;line-height:16px;white-space:nowrap;font-size:11.65px;color:#000">12</div>
<div style="position:absolute;left:43px;top:63px;height:16px;line-height:16px;white-space:nowrap;font-size:11.65px;color:#000">Overworld 3</div>
<div style="position:absolute;left:197px;top:63px;height:16px;line-height:16px;white-space:nowrap;font-size:11.65px;color:#000">9</div>
<div style="position:absolute;left:43px;top:83px;height:16px;line-height:16px;white-space:nowrap;font-size:11.65px;color:#000">Overworld 4</div>
<div style="position:absolute;left:197px;top:83px;height:16px;line-height:16px;white-space:nowrap;font-size:11.65px;color:#000">12</div>
<div style="position:absolute;left:43px;top:103px;height:16px;line-height:16px;white-space:nowrap;font-size:11.65px;color:#000">Overworld 5</div>
<div style="position:absolute;left:197px;top:103px;height:16px;line-height:16px;white-space:nowrap;font-size:11.65px;color:#000">9</div>
<div style="position:absolute;left:43px;top:123px;height:16px;line-height:16px;white-space:nowrap;font-size:11.65px;color:#000">Overworld 6</div>
<div style="position:absolute;left:197px;top:123px;height:16px;line-height:16px;white-space:nowrap;font-size:11.65px;color:#000">6</div>
<div style="position:absolute;left:43px;top:143px;height:16px;line-height:16px;white-space:nowrap;font-size:11.65px;color:#000">Overworld 7</div>
<div style="position:absolute;left:197px;top:143px;height:16px;line-height:16px;white-space:nowrap;font-size:11.65px;color:#000">20</div>
<div style="position:absolute;left:43px;top:163px;height:16px;line-height:16px;white-space:nowrap;font-size:11.65px;color:#000">Overworld 8</div>
<div style="position:absolute;left:197px;top:163px;height:16px;line-height:16px;white-space:nowrap;font-size:11.65px;color:#000">9</div>
<div style="position:absolute;left:43px;top:183px;height:16px;line-height:16px;white-space:nowrap;font-size:11.65px;color:#000">Overworld 9</div>
<div style="position:absolute;left:197px;top:183px;height:16px;line-height:16px;white-space:nowrap;font-size:11.65px;color:#000">12</div>
<div style="position:absolute;left:43px;top:203px;height:16px;line-height:16px;white-space:nowrap;font-size:11.65px;color:#000">Overworld 10</div>
<div style="position:absolute;left:197px;top:203px;height:16px;line-height:16px;white-space:nowrap;font-size:11.65px;color:#000">9</div>
<div style="position:absolute;left:43px;top:223px;height:16px;line-height:16px;white-space:nowrap;font-size:11.65px;color:#000">Overworld 11</div>
<div style="position:absolute;left:197px;top:223px;height:16px;line-height:16px;white-space:nowrap;font-size:11.65px;color:#000">12</div>
<div style="position:absolute;left:43px;top:243px;height:16px;line-height:16px;white-space:nowrap;font-size:11.65px;color:#000">Overworld 12</div>
<div style="position:absolute;left:197px;top:243px;height:16px;line-height:16px;white-space:nowrap;font-size:11.65px;color:#000">9</div>
<div style="position:absolute;left:43px;top:263px;height:16px;line-height:16px;white-space:nowrap;font-size:11.65px;color:#000">Overworld 13</div>
<div style="position:absolute;left:197px;top:263px;height:16px;line-height:16px;white-space:nowrap;font-size:11.65px;color:#000">6</div>
<div style="position:absolute;left:43px;top:283px;height:16px;line-height:16px;white-space:nowrap;font-size:11.65px;color:#000">Overworld 14</div>
<div style="position:absolute;left:197px;top:283px;height:16px;line-height:16px;white-space:nowrap;font-size:11.65px;color:#000">10</div>
<div style="position:absolute;left:43px;top:303px;height:16px;line-height:16px;white-space:nowrap;font-size:11.65px;color:#000">Overworld 15</div>
<div style="position:absolute;left:197px;top:303px;height:16px;line-height:16px;white-space:nowrap;font-size:11.65px;color:#000">10</div>
<div style="position:absolute;left:43px;top:323px;height:16px;line-height:16px;white-space:nowrap;font-size:11.65px;color:#000">Overworld 16</div>
<div style="position:absolute;left:197px;top:323px;height:16px;line-height:16px;white-space:nowrap;font-size:11.65px;color:#000">9</div>
<div style="position:absolute;left:43px;top:343px;height:16px;line-height:16px;white-space:nowrap;font-size:11.65px;color:#000">Overworld 17</div>
<div style="position:absolute;left:197px;top:343px;height:16px;line-height:16px;white-space:nowrap;font-size:11.65px;color:#000">10</div>
<div style="position:absolute;left:43px;top:363px;height:16px;line-height:16px;white-space:nowrap;font-size:11.65px;color:#000">Overworld 18</div>
<div style="position:absolute;left:197px;top:363px;height:16px;line-height:16px;white-space:nowrap;font-size:11.65px;color:#000">10</div>
<div style="position:absolute;left:43px;top:383px;height:16px;line-height:16px;white-space:nowrap;font-size:11.65px;color:#000">Overworld 19</div>
<div style="position:absolute;left:197px;top:383px;height:16px;line-height:16px;white-space:nowrap;font-size:11.65px;color:#000">10</div>
</div>
<svg style="position:absolute;left:402px;top:210px" width="8" height="16" viewBox="0 0 8 16" shape-rendering="crispEdges"><rect x="0" y="0" width="8" height="16" fill="#7e76a6"/><rect x="2" y="6" width="4" height="1" fill="#f06040"/><rect x="1" y="7" width="6" height="1" fill="#f06040"/><rect x="1" y="8" width="1" height="1" fill="#b83020"/><rect x="2" y="8" width="4" height="1" fill="#f06040"/><rect x="6" y="8" width="1" height="1" fill="#b83020"/><rect x="0" y="9" width="1" height="1" fill="#202030"/><rect x="1" y="9" width="1" height="1" fill="#e8a880"/><rect x="2" y="9" width="4" height="1" fill="#e8e0f0"/><rect x="6" y="9" width="1" height="1" fill="#e8a880"/><rect x="7" y="9" width="1" height="1" fill="#202030"/><rect x="1" y="10" width="2" height="1" fill="#e8a880"/><rect x="3" y="10" width="2" height="1" fill="#202030"/><rect x="5" y="10" width="2" height="1" fill="#e8a880"/><rect x="2" y="11" width="4" height="1" fill="#e8a880"/><rect x="0" y="12" width="2" height="1" fill="#e8a880"/><rect x="2" y="12" width="4" height="1" fill="#b03060"/><rect x="6" y="12" width="2" height="1" fill="#e8a880"/><rect x="1" y="13" width="1" height="1" fill="#202030"/><rect x="2" y="13" width="1" height="1" fill="#283878"/><rect x="3" y="13" width="2" height="1" fill="#3850a0"/><rect x="5" y="13" width="1" height="1" fill="#283878"/><rect x="6" y="13" width="1" height="1" fill="#202030"/><rect x="1" y="14" width="2" height="1" fill="#202030"/><rect x="3" y="14" width="2" height="1" fill="#3850a0"/><rect x="5" y="14" width="2" height="1" fill="#202030"/><rect x="1" y="15" width="2" height="1" fill="#202030"/><rect x="5" y="15" width="2" height="1" fill="#202030"/></svg>
<svg style="position:absolute;left:402px;top:230px" width="16" height="16" viewBox="0 0 16 16" shape-rendering="crispEdges"><rect x="0" y="0" width="16" height="16" fill="#7e76a6"/><rect x="6" y="5" width="4" height="1" fill="#f06040"/><rect x="5" y="6" width="6" height="1" fill="#f06040"/><rect x="5" y="7" width="1" height="1" fill="#b83020"/><rect x="6" y="7" width="4" height="1" fill="#f06040"/><rect x="10" y="7" width="1" height="1" fill="#b83020"/><rect x="4" y="8" width="1" height="1" fill="#202030"/><rect x="5" y="8" width="1" height="1" fill="#b83020"/><rect x="6" y="8" width="4" height="1" fill="#e8e0f0"/><rect x="10" y="8" width="1" height="1" fill="#b83020"/><rect x="11" y="8" width="1" height="1" fill="#202030"/><rect x="5" y="9" width="2" height="1" fill="#e8a880"/><rect x="7" y="9" width="2" height="1" fill="#604030"/><rect x="9" y="9" width="2" height="1" fill="#e8a880"/><rect x="5" y="10" width="6" height="1" fill="#604030"/><rect x="6" y="11" width="4" height="1" fill="#b03060"/><rect x="6" y="12" width="1" height="1" fill="#202030"/><rect x="7" y="12" width="2" height="1" fill="#283878"/><rect x="9" y="12" width="1" height="1" fill="#202030"/><rect x="7" y="13" width="2" height="1" fill="#202030"/><rect x="7" y="14" width="2" height="1" fill="#403030"/></svg>
<svg style="position:absolute;left:402px;top:250px" width="8" height="16" viewBox="0 0 8 16" shape-rendering="crispEdges"><rect x="0" y="0" width="8" height="16" fill="#7e76a6"/><rect x="2" y="6" width="4" height="1" fill="#f06040"/><rect x="1" y="7" width="6" height="1" fill="#f06040"/><rect x="1" y="8" width="1" height="1" fill="#b83020"/><rect x="2" y="8" width="4" height="1" fill="#f06040"/><rect x="6" y="8" width="1" height="1" fill="#b83020"/><rect x="0" y="9" width="1" height="1" fill="#202030"/><rect x="1" y="9" width="1" height="1" fill="#e8a880"/><rect x="2" y="9" width="4" height="1" fill="#e8e0f0"/><rect x="6" y="9" width="1" height="1" fill="#e8a880"/><rect x="7" y="9" width="1" height="1" fill="#202030"/><rect x="1" y="10" width="2" height="1" fill="#e8a880"/><rect x="3" y="10" width="2" height="1" fill="#202030"/><rect x="5" y="10" width="2" height="1" fill="#e8a880"/><rect x="2" y="11" width="4" height="1" fill="#e8a880"/><rect x="0" y="12" width="2" height="1" fill="#e8a880"/><rect x="2" y="12" width="4" height="1" fill="#b03060"/><rect x="6" y="12" width="2" height="1" fill="#e8a880"/><rect x="1" y="13" width="1" height="1" fill="#202030"/><rect x="2" y="13" width="1" height="1" fill="#283878"/><rect x="3" y="13" width="2" height="1" fill="#3850a0"/><rect x="5" y="13" width="1" height="1" fill="#283878"/><rect x="6" y="13" width="1" height="1" fill="#202030"/><rect x="1" y="14" width="2" height="1" fill="#202030"/><rect x="3" y="14" width="2" height="1" fill="#3850a0"/><rect x="5" y="14" width="2" height="1" fill="#202030"/><rect x="1" y="15" width="2" height="1" fill="#202030"/><rect x="5" y="15" width="2" height="1" fill="#202030"/></svg>
<svg style="position:absolute;left:402px;top:270px" width="8" height="16" viewBox="0 0 8 16" shape-rendering="crispEdges"><rect x="0" y="0" width="8" height="16" fill="#7e76a6"/><rect x="2" y="6" width="4" height="1" fill="#f06040"/><rect x="1" y="7" width="6" height="1" fill="#f06040"/><rect x="1" y="8" width="1" height="1" fill="#b83020"/><rect x="2" y="8" width="4" height="1" fill="#f06040"/><rect x="6" y="8" width="1" height="1" fill="#b83020"/><rect x="0" y="9" width="1" height="1" fill="#202030"/><rect x="1" y="9" width="1" height="1" fill="#e8a880"/><rect x="2" y="9" width="4" height="1" fill="#e8e0f0"/><rect x="6" y="9" width="1" height="1" fill="#e8a880"/><rect x="7" y="9" width="1" height="1" fill="#202030"/><rect x="1" y="10" width="2" height="1" fill="#e8a880"/><rect x="3" y="10" width="2" height="1" fill="#202030"/><rect x="5" y="10" width="2" height="1" fill="#e8a880"/><rect x="2" y="11" width="4" height="1" fill="#e8a880"/><rect x="0" y="12" width="2" height="1" fill="#e8a880"/><rect x="2" y="12" width="4" height="1" fill="#b03060"/><rect x="6" y="12" width="2" height="1" fill="#e8a880"/><rect x="1" y="13" width="1" height="1" fill="#202030"/><rect x="2" y="13" width="1" height="1" fill="#283878"/><rect x="3" y="13" width="2" height="1" fill="#3850a0"/><rect x="5" y="13" width="1" height="1" fill="#283878"/><rect x="6" y="13" width="1" height="1" fill="#202030"/><rect x="1" y="14" width="2" height="1" fill="#202030"/><rect x="3" y="14" width="2" height="1" fill="#3850a0"/><rect x="5" y="14" width="2" height="1" fill="#202030"/><rect x="1" y="15" width="2" height="1" fill="#202030"/><rect x="5" y="15" width="2" height="1" fill="#202030"/></svg>
<svg style="position:absolute;left:402px;top:290px" width="16" height="16" viewBox="0 0 16 16" shape-rendering="crispEdges"><rect x="0" y="0" width="16" height="16" fill="#7e76a6"/><rect x="15" y="2" width="1" height="1" fill="#202030"/><rect x="14" y="3" width="1" height="1" fill="#202030"/><rect x="13" y="4" width="1" height="1" fill="#202030"/><rect x="6" y="5" width="4" height="1" fill="#f06040"/><rect x="12" y="5" width="1" height="1" fill="#202030"/><rect x="5" y="6" width="6" height="1" fill="#f06040"/><rect x="11" y="6" width="1" height="1" fill="#202030"/><rect x="5" y="7" width="1" height="1" fill="#b83020"/><rect x="6" y="7" width="4" height="1" fill="#f06040"/><rect x="10" y="7" width="1" height="1" fill="#b83020"/><rect x="11" y="7" width="1" height="1" fill="#202030"/><rect x="4" y="8" width="1" height="1" fill="#202030"/><rect x="5" y="8" width="1" height="1" fill="#e8a880"/><rect x="6" y="8" width="4" height="1" fill="#e8e0f0"/><rect x="10" y="8" width="1" height="1" fill="#202030"/><rect x="5" y="9" width="2" height="1" fill="#e8a880"/><rect x="7" y="9" width="2" height="1" fill="#202030"/><rect x="9" y="9" width="2" height="1" fill="#e8a880"/><rect x="6" y="10" width="4" height="1" fill="#e8a880"/><rect x="5" y="11" width="1" height="1" fill="#e8a880"/><rect x="6" y="11" width="4" height="1" fill="#403030"/><rect x="10" y="11" width="1" height="1" fill="#e8a880"/><rect x="6" y="12" width="1" height="1" fill="#202030"/><rect x="7" y="12" width="2" height="1" fill="#403030"/><rect x="9" y="12" width="1" height="1" fill="#202030"/><rect x="6" y="13" width="4" height="1" fill="#202030"/><rect x="7" y="14" width="2" height="1" fill="#202030"/></svg>
<svg style="position:absolute;left:402px;top:310px" width="8" height="16" viewBox="0 0 8 16" shape-rendering="crispEdges"><rect x="0" y="0" width="8" height="16" fill="#7e76a6"/><rect x="2" y="6" width="4" height="1" fill="#f06040"/><rect x="1" y="7" width="6" height="1" fill="#f06040"/><rect x="1" y="8" width="1" height="1" fill="#b83020"/><rect x="2" y="8" width="4" height="1" fill="#f06040"/><rect x="6" y="8" width="1" height="1" fill="#b83020"/><rect x="0" y="9" width="1" height="1" fill="#202030"/><rect x="1" y="9" width="1" height="1" fill="#e8a880"/><rect x="2" y="9" width="4" height="1" fill="#e8e0f0"/><rect x="6" y="9" width="1" height="1" fill="#e8a880"/><rect x="7" y="9" width="1" height="1" fill="#202030"/><rect x="1" y="10" width="2" height="1" fill="#e8a880"/><rect x="3" y="10" width="2" height="1" fill="#202030"/><rect x="5" y="10" width="2" height="1" fill="#e8a880"/><rect x="2" y="11" width="4" height="1" fill="#e8a880"/><rect x="0" y="12" width="2" height="1" fill="#e8a880"/><rect x="2" y="12" width="4" height="1" fill="#b03060"/><rect x="6" y="12" width="2" height="1" fill="#e8a880"/><rect x="1" y="13" width="1" height="1" fill="#202030"/><rect x="2" y="13" width="1" height="1" fill="#283878"/><rect x="3" y="13" width="2" height="1" fill="#3850a0"/><rect x="5" y="13" width="1" height="1" fill="#283878"/><rect x="6" y="13" width="1" height="1" fill="#202030"/><rect x="1" y="14" width="2" height="1" fill="#202030"/><rect x="3" y="14" width="2" height="1" fill="#3850a0"/><rect x="5" y="14" width="2" height="1" fill="#202030"/><rect x="1" y="15" width="2" height="1" fill="#202030"/><rect x="5" y="15" width="2" height="1" fill="#202030"/></svg>
<svg style="position:absolute;left:402px;top:330px" width="16" height="16" viewBox="0 0 16 16" shape-rendering="crispEdges"><rect x="0" y="0" width="16" height="16" fill="#7e76a6"/><rect x="6" y="5" width="4" height="1" fill="#f06040"/><rect x="5" y="6" width="6" height="1" fill="#f06040"/><rect x="5" y="7" width="1" height="1" fill="#b83020"/><rect x="6" y="7" width="4" height="1" fill="#f06040"/><rect x="10" y="7" width="1" height="1" fill="#b83020"/><rect x="4" y="8" width="1" height="1" fill="#202030"/><rect x="5" y="8" width="1" height="1" fill="#b83020"/><rect x="6" y="8" width="4" height="1" fill="#e8e0f0"/><rect x="10" y="8" width="1" height="1" fill="#b83020"/><rect x="11" y="8" width="1" height="1" fill="#202030"/><rect x="5" y="9" width="2" height="1" fill="#e8a880"/><rect x="7" y="9" width="2" height="1" fill="#604030"/><rect x="9" y="9" width="2" height="1" fill="#e8a880"/><rect x="5" y="10" width="6" height="1" fill="#604030"/><rect x="6" y="11" width="4" height="1" fill="#b03060"/><rect x="6" y="12" width="1" height="1" fill="#202030"/><rect x="7" y="12" width="2" height="1" fill="#283878"/><rect x="9" y="12" width="1" height="1" fill="#202030"/><rect x="7" y="13" width="2" height="1" fill="#202030"/><rect x="7" y="14" width="2" height="1" fill="#403030"/></svg>
<svg style="position:absolute;left:402px;top:350px" width="8" height="16" viewBox="0 0 8 16" shape-rendering="crispEdges"><rect x="0" y="0" width="8" height="16" fill="#7e76a6"/><rect x="2" y="6" width="4" height="1" fill="#f4f4f4"/><rect x="1" y="7" width="6" height="1" fill="#f4f4f4"/><rect x="1" y="8" width="1" height="1" fill="#a8a8b8"/><rect x="2" y="8" width="4" height="1" fill="#f4f4f4"/><rect x="6" y="8" width="1" height="1" fill="#a8a8b8"/><rect x="0" y="9" width="1" height="1" fill="#202030"/><rect x="1" y="9" width="1" height="1" fill="#e8a880"/><rect x="2" y="9" width="4" height="1" fill="#202030"/><rect x="6" y="9" width="1" height="1" fill="#e8a880"/><rect x="7" y="9" width="1" height="1" fill="#202030"/><rect x="1" y="10" width="2" height="1" fill="#e8a880"/><rect x="3" y="10" width="2" height="1" fill="#202030"/><rect x="5" y="10" width="2" height="1" fill="#e8a880"/><rect x="2" y="11" width="4" height="1" fill="#e8a880"/><rect x="0" y="12" width="1" height="1" fill="#e8a880"/><rect x="1" y="12" width="6" height="1" fill="#403030"/><rect x="7" y="12" width="1" height="1" fill="#e8a880"/><rect x="1" y="13" width="1" height="1" fill="#202030"/><rect x="2" y="13" width="4" height="1" fill="#403030"/><rect x="6" y="13" width="1" height="1" fill="#202030"/><rect x="1" y="14" width="2" height="1" fill="#202030"/><rect x="3" y="14" width="2" height="1" fill="#403030"/><rect x="5" y="14" width="2" height="1" fill="#202030"/><rect x="1" y="15" width="2" height="1" fill="#202030"/><rect x="5" y="15" width="2" height="1" fill="#202030"/></svg>
<svg style="position:absolute;left:402px;top:370px" width="16" height="16" viewBox="0 0 16 16" shape-rendering="crispEdges"><rect x="0" y="0" width="16" height="16" fill="#7e76a6"/><rect x="6" y="5" width="4" height="1" fill="#f4f4f4"/><rect x="5" y="6" width="6" height="1" fill="#f4f4f4"/><rect x="5" y="7" width="1" height="1" fill="#a8a8b8"/><rect x="6" y="7" width="4" height="1" fill="#f4f4f4"/><rect x="10" y="7" width="1" height="1" fill="#a8a8b8"/><rect x="4" y="8" width="1" height="1" fill="#202030"/><rect x="5" y="8" width="1" height="1" fill="#e8a880"/><rect x="6" y="8" width="4" height="1" fill="#202030"/><rect x="10" y="8" width="1" height="1" fill="#e8a880"/><rect x="11" y="8" width="1" height="1" fill="#202030"/><rect x="5" y="9" width="2" height="1" fill="#e8a880"/><rect x="7" y="9" width="2" height="1" fill="#202030"/><rect x="9" y="9" width="2" height="1" fill="#e8a880"/><rect x="6" y="10" width="4" height="1" fill="#e8a880"/><rect x="5" y="11" width="1" height="1" fill="#e8a880"/><rect x="6" y="11" width="4" height="1" fill="#403030"/><rect x="10" y="11" width="1" height="1" fill="#e8a880"/><rect x="6" y="12" width="1" height="1" fill="#202030"/><rect x="7" y="12" width="2" height="1" fill="#403030"/><rect x="9" y="12" width="1" height="1" fill="#202030"/><rect x="6" y="13" width="4" height="1" fill="#202030"/><rect x="7" y="14" width="2" height="1" fill="#202030"/></svg>
<svg style="position:absolute;left:402px;top:390px" width="8" height="16" viewBox="0 0 8 16" shape-rendering="crispEdges"><rect x="0" y="0" width="8" height="16" fill="#7e76a6"/><rect x="2" y="6" width="4" height="1" fill="#f4f4f4"/><rect x="1" y="7" width="6" height="1" fill="#f4f4f4"/><rect x="1" y="8" width="1" height="1" fill="#a8a8b8"/><rect x="2" y="8" width="4" height="1" fill="#f4f4f4"/><rect x="6" y="8" width="1" height="1" fill="#a8a8b8"/><rect x="0" y="9" width="1" height="1" fill="#202030"/><rect x="1" y="9" width="1" height="1" fill="#e8a880"/><rect x="2" y="9" width="4" height="1" fill="#202030"/><rect x="6" y="9" width="1" height="1" fill="#e8a880"/><rect x="7" y="9" width="1" height="1" fill="#202030"/><rect x="1" y="10" width="2" height="1" fill="#e8a880"/><rect x="3" y="10" width="2" height="1" fill="#202030"/><rect x="5" y="10" width="2" height="1" fill="#e8a880"/><rect x="2" y="11" width="4" height="1" fill="#e8a880"/><rect x="0" y="12" width="1" height="1" fill="#e8a880"/><rect x="1" y="12" width="6" height="1" fill="#403030"/><rect x="7" y="12" width="1" height="1" fill="#e8a880"/><rect x="1" y="13" width="1" height="1" fill="#202030"/><rect x="2" y="13" width="4" height="1" fill="#403030"/><rect x="6" y="13" width="1" height="1" fill="#202030"/><rect x="1" y="14" width="2" height="1" fill="#202030"/><rect x="3" y="14" width="2" height="1" fill="#403030"/><rect x="5" y="14" width="2" height="1" fill="#202030"/><rect x="1" y="15" width="2" height="1" fill="#202030"/><rect x="5" y="15" width="2" height="1" fill="#202030"/></svg>
<svg style="position:absolute;left:402px;top:410px" width="8" height="16" viewBox="0 0 8 16" shape-rendering="crispEdges"><rect x="0" y="0" width="8" height="16" fill="#7e76a6"/><rect x="2" y="6" width="4" height="1" fill="#f4f4f4"/><rect x="1" y="7" width="6" height="1" fill="#f4f4f4"/><rect x="1" y="8" width="1" height="1" fill="#a8a8b8"/><rect x="2" y="8" width="4" height="1" fill="#f4f4f4"/><rect x="6" y="8" width="1" height="1" fill="#a8a8b8"/><rect x="0" y="9" width="1" height="1" fill="#202030"/><rect x="1" y="9" width="1" height="1" fill="#e8a880"/><rect x="2" y="9" width="4" height="1" fill="#202030"/><rect x="6" y="9" width="1" height="1" fill="#e8a880"/><rect x="7" y="9" width="1" height="1" fill="#202030"/><rect x="1" y="10" width="2" height="1" fill="#e8a880"/><rect x="3" y="10" width="2" height="1" fill="#202030"/><rect x="5" y="10" width="2" height="1" fill="#e8a880"/><rect x="2" y="11" width="4" height="1" fill="#e8a880"/><rect x="0" y="12" width="1" height="1" fill="#e8a880"/><rect x="1" y="12" width="6" height="1" fill="#403030"/><rect x="7" y="12" width="1" height="1" fill="#e8a880"/><rect x="1" y="13" width="1" height="1" fill="#202030"/><rect x="2" y="13" width="4" height="1" fill="#403030"/><rect x="6" y="13" width="1" height="1" fill="#202030"/><rect x="1" y="14" width="2" height="1" fill="#202030"/><rect x="3" y="14" width="2" height="1" fill="#403030"/><rect x="5" y="14" width="2" height="1" fill="#202030"/><rect x="1" y="15" width="2" height="1" fill="#202030"/><rect x="5" y="15" width="2" height="1" fill="#202030"/></svg>
<svg style="position:absolute;left:402px;top:430px" width="16" height="16" viewBox="0 0 16 16" shape-rendering="crispEdges"><rect x="0" y="0" width="16" height="16" fill="#7e76a6"/><rect x="15" y="2" width="1" height="1" fill="#202030"/><rect x="14" y="3" width="1" height="1" fill="#202030"/><rect x="13" y="4" width="1" height="1" fill="#202030"/><rect x="6" y="5" width="4" height="1" fill="#f4f4f4"/><rect x="12" y="5" width="1" height="1" fill="#202030"/><rect x="5" y="6" width="6" height="1" fill="#f4f4f4"/><rect x="11" y="6" width="1" height="1" fill="#202030"/><rect x="5" y="7" width="1" height="1" fill="#a8a8b8"/><rect x="6" y="7" width="4" height="1" fill="#f4f4f4"/><rect x="10" y="7" width="1" height="1" fill="#a8a8b8"/><rect x="11" y="7" width="1" height="1" fill="#202030"/><rect x="4" y="8" width="1" height="1" fill="#202030"/><rect x="5" y="8" width="1" height="1" fill="#e8a880"/><rect x="6" y="8" width="5" height="1" fill="#202030"/><rect x="5" y="9" width="2" height="1" fill="#e8a880"/><rect x="7" y="9" width="2" height="1" fill="#202030"/><rect x="9" y="9" width="2" height="1" fill="#e8a880"/><rect x="6" y="10" width="4" height="1" fill="#e8a880"/><rect x="5" y="11" width="1" height="1" fill="#e8a880"/><rect x="6" y="11" width="4" height="1" fill="#403030"/><rect x="10" y="11" width="1" height="1" fill="#e8a880"/><rect x="6" y="12" width="1" height="1" fill="#202030"/><rect x="7" y="12" width="2" height="1" fill="#403030"/><rect x="9" y="12" width="1" height="1" fill="#202030"/><rect x="6" y="13" width="4" height="1" fill="#202030"/><rect x="7" y="14" width="2" height="1" fill="#202030"/></svg>
<svg style="position:absolute;left:402px;top:450px" width="8" height="16" viewBox="0 0 8 16" shape-rendering="crispEdges"><rect x="0" y="0" width="8" height="16" fill="#7e76a6"/><rect x="2" y="6" width="4" height="1" fill="#f4f4f4"/><rect x="1" y="7" width="6" height="1" fill="#f4f4f4"/><rect x="1" y="8" width="1" height="1" fill="#a8a8b8"/><rect x="2" y="8" width="4" height="1" fill="#f4f4f4"/><rect x="6" y="8" width="1" height="1" fill="#a8a8b8"/><rect x="0" y="9" width="1" height="1" fill="#202030"/><rect x="1" y="9" width="1" height="1" fill="#e8a880"/><rect x="2" y="9" width="4" height="1" fill="#202030"/><rect x="6" y="9" width="1" height="1" fill="#e8a880"/><rect x="7" y="9" width="1" height="1" fill="#202030"/><rect x="1" y="10" width="2" height="1" fill="#e8a880"/><rect x="3" y="10" width="2" height="1" fill="#202030"/><rect x="5" y="10" width="2" height="1" fill="#e8a880"/><rect x="2" y="11" width="4" height="1" fill="#e8a880"/><rect x="0" y="12" width="1" height="1" fill="#e8a880"/><rect x="1" y="12" width="6" height="1" fill="#403030"/><rect x="7" y="12" width="1" height="1" fill="#e8a880"/><rect x="1" y="13" width="1" height="1" fill="#202030"/><rect x="2" y="13" width="4" height="1" fill="#403030"/><rect x="6" y="13" width="1" height="1" fill="#202030"/><rect x="1" y="14" width="2" height="1" fill="#202030"/><rect x="3" y="14" width="2" height="1" fill="#403030"/><rect x="5" y="14" width="2" height="1" fill="#202030"/><rect x="1" y="15" width="2" height="1" fill="#202030"/><rect x="5" y="15" width="2" height="1" fill="#202030"/></svg>
<svg style="position:absolute;left:402px;top:470px" width="16" height="16" viewBox="0 0 16 16" shape-rendering="crispEdges"><rect x="0" y="0" width="16" height="16" fill="#7e76a6"/><rect x="6" y="5" width="4" height="1" fill="#f4f4f4"/><rect x="5" y="6" width="6" height="1" fill="#f4f4f4"/><rect x="5" y="7" width="1" height="1" fill="#a8a8b8"/><rect x="6" y="7" width="4" height="1" fill="#f4f4f4"/><rect x="10" y="7" width="1" height="1" fill="#a8a8b8"/><rect x="4" y="8" width="1" height="1" fill="#202030"/><rect x="5" y="8" width="1" height="1" fill="#e8a880"/><rect x="6" y="8" width="4" height="1" fill="#202030"/><rect x="10" y="8" width="1" height="1" fill="#e8a880"/><rect x="11" y="8" width="1" height="1" fill="#202030"/><rect x="5" y="9" width="2" height="1" fill="#e8a880"/><rect x="7" y="9" width="2" height="1" fill="#202030"/><rect x="9" y="9" width="2" height="1" fill="#e8a880"/><rect x="6" y="10" width="4" height="1" fill="#e8a880"/><rect x="5" y="11" width="1" height="1" fill="#e8a880"/><rect x="6" y="11" width="4" height="1" fill="#403030"/><rect x="10" y="11" width="1" height="1" fill="#e8a880"/><rect x="6" y="12" width="1" height="1" fill="#202030"/><rect x="7" y="12" width="2" height="1" fill="#403030"/><rect x="9" y="12" width="1" height="1" fill="#202030"/><rect x="6" y="13" width="4" height="1" fill="#202030"/><rect x="7" y="14" width="2" height="1" fill="#202030"/></svg>
<svg style="position:absolute;left:402px;top:490px" width="8" height="16" viewBox="0 0 8 16" shape-rendering="crispEdges"><rect x="0" y="0" width="8" height="16" fill="#6dbf98"/><rect x="2" y="5" width="1" height="1" fill="#a8a8b8"/><rect x="3" y="5" width="2" height="1" fill="#f4f4f4"/><rect x="5" y="5" width="1" height="1" fill="#a8a8b8"/><rect x="1" y="6" width="6" height="1" fill="#f4f4f4"/><rect x="1" y="7" width="1" height="1" fill="#f4f4f4"/><rect x="2" y="7" width="1" height="1" fill="#a8a8b8"/><rect x="3" y="7" width="2" height="1" fill="#f4f4f4"/><rect x="5" y="7" width="1" height="1" fill="#a8a8b8"/><rect x="6" y="7" width="1" height="1" fill="#f4f4f4"/><rect x="1" y="8" width="1" height="1" fill="#202030"/><rect x="2" y="8" width="4" height="1" fill="#e8a880"/><rect x="6" y="8" width="1" height="1" fill="#202030"/><rect x="1" y="9" width="1" height="1" fill="#e8a880"/><rect x="2" y="9" width="1" height="1" fill="#202030"/><rect x="3" y="9" width="2" height="1" fill="#e8a880"/><rect x="5" y="9" width="1" height="1" fill="#202030"/><rect x="6" y="9" width="1" height="1" fill="#e8a880"/><rect x="2" y="10" width="4" height="1" fill="#e8a880"/><rect x="1" y="11" width="1" height="1" fill="#604030"/><rect x="2" y="11" width="4" height="1" fill="#805040"/><rect x="6" y="11" width="1" height="1" fill="#604030"/><rect x="0" y="12" width="1" height="1" fill="#e8a880"/><rect x="1" y="12" width="6" height="1" fill="#805040"/><rect x="7" y="12" width="1" height="1" fill="#e8a880"/><rect x="1" y="13" width="1" height="1" fill="#604030"/><rect x="2" y="13" width="4" height="1" fill="#805040"/><rect x="6" y="13" width="1" height="1" fill="#604030"/><rect x="1" y="14" width="2" height="1" fill="#202030"/><rect x="5" y="14" width="2" height="1" fill="#202030"/></svg>
<svg style="position:absolute;left:402px;top:510px" width="8" height="16" viewBox="0 0 8 16" shape-rendering="crispEdges"><rect x="0" y="0" width="8" height="16" fill="#6dbf98"/><rect x="2" y="5" width="4" height="1" fill="#e06030"/><rect x="1" y="6" width="2" height="1" fill="#e06030"/><rect x="3" y="6" width="2" height="1" fill="#b83020"/><rect x="5" y="6" width="2" height="1" fill="#e06030"/><rect x="1" y="7" width="1" height="1" fill="#e06030"/><rect x="2" y="7" width="4" height="1" fill="#e8a880"/><rect x="6" y="7" width="1" height="1" fill="#e06030"/><rect x="1" y="8" width="1" height="1" fill="#e8a880"/><rect x="2" y="8" width="1" height="1" fill="#202030"/><rect x="3" y="8" width="2" height="1" fill="#e8a880"/><rect x="5" y="8" width="1" height="1" fill="#202030"/><rect x="6" y="8" width="1" height="1" fill="#e8a880"/><rect x="2" y="9" width="4" height="1" fill="#e8a880"/><rect x="1" y="10" width="6" height="1" fill="#805040"/><rect x="0" y="11" width="1" height="1" fill="#e8a880"/><rect x="1" y="11" width="6" height="1" fill="#805040"/><rect x="7" y="11" width="1" height="1" fill="#e8a880"/><rect x="1" y="12" width="1" height="1" fill="#805040"/><rect x="2" y="12" width="1" height="1" fill="#604030"/><rect x="3" y="12" width="2" height="1" fill="#805040"/><rect x="5" y="12" width="1" height="1" fill="#604030"/><rect x="6" y="12" width="1" height="1" fill="#805040"/><rect x="1" y="13" width="2" height="1" fill="#805040"/><rect x="5" y="13" width="2" height="1" fill="#805040"/><rect x="1" y="14" width="2" height="1" fill="#202030"/><rect x="5" y="14" width="2" height="1" fill="#202030"/></svg>
<svg style="position:absolute;left:402px;top:530px" width="16" height="16" viewBox="0 0 16 16" shape-rendering="crispEdges"><rect x="0" y="0" width="16" height="16" fill="#6dbf98"/><rect x="4" y="0" width="8" height="1" fill="#a89040"/><rect x="3" y="1" width="4" height="1" fill="#e0c070"/><rect x="7" y="1" width="1" height="1" fill="#a89040"/><rect x="8" y="1" width="4" height="1" fill="#e0c070"/><rect x="12" y="1" width="1" height="1" fill="#a89040"/><rect x="2" y="2" width="1" height="1" fill="#a89040"/><rect x="3" y="2" width="10" height="1" fill="#e0c070"/><rect x="13" y="2" width="1" height="1" fill="#a89040"/><rect x="3" y="3" width="1" height="1" fill="#a89040"/><rect x="4" y="3" width="8" height="1" fill="#e0c070"/><rect x="12" y="3" width="1" height="1" fill="#a89040"/><rect x="2" y="4" width="1" height="1" fill="#202030"/><rect x="3" y="4" width="1" height="1" fill="#e8a880"/><rect x="4" y="4" width="8" height="1" fill="#a89040"/><rect x="12" y="4" width="1" height="1" fill="#e8a880"/><rect x="13" y="4" width="1" height="1" fill="#202030"/><rect x="2" y="5" width="1" height="1" fill="#202030"/><rect x="3" y="5" width="10" height="1" fill="#e8a880"/><rect x="13" y="5" width="1" height="1" fill="#202030"/><rect x="2" y="6" width="1" height="1" fill="#c07858"/><rect x="3" y="6" width="2" height="1" fill="#e8a880"/><rect x="5" y="6" width="1" height="1" fill="#202030"/><rect x="6" y="6" width="4" height="1" fill="#e8a880"/><rect x="10" y="6" width="1" height="1" fill="#202030"/><rect x="11" y="6" width="2" height="1" fill="#e8a880"/><rect x="13" y="6" width="1" height="1" fill="#c07858"/><rect x="3" y="7" width="2" height="1" fill="#e8a880"/><rect x="5" y="7" width="1" height="1" fill="#202030"/><rect x="6" y="7" width="4" height="1" fill="#e8a880"/><rect x="10" y="7" width="1" height="1" fill="#202030"/><rect x="11" y="7" width="2" height="1" fill="#e8a880"/><rect x="3" y="8" width="1" height="1" fill="#c07858"/><rect x="4" y="8" width="8" height="1" fill="#e8a880"/><rect x="12" y="8" width="1" height="1" fill="#c07858"/><rect x="4" y="9" width="1" height="1" fill="#c07858"/><rect x="5" y="9" width="6" height="1" fill="#e8a880"/><rect x="11" y="9" width="1" height="1" fill="#c07858"/><rect x="2" y="10" width="1" height="1" fill="#e8a880"/><rect x="3" y="10" width="2" height="1" fill="#f4f4f4"/><rect x="5" y="10" width="6" height="1" fill="#202030"/><rect x="11" y="10" width="2" height="1" fill="#f4f4f4"/><rect x="13" y="10" width="1" height="1" fill="#e8a880"/><rect x="2" y="11" width="2" height="1" fill="#e8a880"/><rect x="4" y="11" width="1" height="1" fill="#f4f4f4"/><rect x="5" y="11" width="2" height="1" fill="#9090a0"/><rect x="7" y="11" width="2" height="1" fill="#e06030"/><rect x="9" y="11" width="2" height="1" fill="#9090a0"/><rect x="11" y="11" width="1" height="1" fill="#f4f4f4"/><rect x="12" y="11" width="2" height="1" fill="#e8a880"/><rect x="3" y="12" width="2" height="1" fill="#202030"/><rect x="5" y="12" width="6" height="1" fill="#9090a0"/><rect x="11" y="12" width="2" height="1" fill="#202030"/><rect x="4" y="13" width="1" height="1" fill="#202030"/><rect x="5" y="13" width="6" height="1" fill="#9090a0"/><rect x="11" y="13" width="1" height="1" fill="#202030"/><rect x="4" y="14" width="3" height="1" fill="#202030"/><rect x="9" y="14" width="3" height="1" fill="#202030"/></svg>
<svg style="position:absolute;left:402px;top:550px" width="16" height="16" viewBox="0 0 16 16" shape-rendering="crispEdges"><rect x="0" y="0" width="16" height="16" fill="#6dbf98"/><rect x="5" y="1" width="1" height="1" fill="#c06080"/><rect x="6" y="1" width="5" height="1" fill="#f090a8"/><rect x="11" y="1" width="1" height="1" fill="#c06080"/><rect x="3" y="2" width="1" height="1" fill="#c06080"/><rect x="4" y="2" width="9" height="1" fill="#f090a8"/><rect x="13" y="2" width="1" height="1" fill="#c06080"/><rect x="2" y="3" width="13" height="1" fill="#f090a8"/><rect x="2" y="4" width="2" height="1" fill="#f090a8"/><rect x="4" y="4" width="8" height="1" fill="#e8a880"/><rect x="12" y="4" width="3" height="1" fill="#f090a8"/><rect x="1" y="5" width="2" height="1" fill="#f090a8"/><rect x="3" y="5" width="2" height="1" fill="#e8a880"/><rect x="5" y="5" width="1" height="1" fill="#202030"/><rect x="6" y="5" width="4" height="1" fill="#e8a880"/><rect x="10" y="5" width="1" height="1" fill="#202030"/><rect x="11" y="5" width="2" height="1" fill="#e8a880"/><rect x="13" y="5" width="2" height="1" fill="#f090a8"/><rect x="1" y="6" width="1" height="1" fill="#f090a8"/><rect x="2" y="6" width="1" height="1" fill="#c06080"/><rect x="3" y="6" width="2" height="1" fill="#e8a880"/><rect x="5" y="6" width="1" height="1" fill="#202030"/><rect x="6" y="6" width="4" height="1" fill="#e8a880"/><rect x="10" y="6" width="1" height="1" fill="#202030"/><rect x="11" y="6" width="2" height="1" fill="#e8a880"/><rect x="13" y="6" width="1" height="1" fill="#c06080"/><rect x="14" y="6" width="1" height="1" fill="#f090a8"/><rect x="2" y="7" width="1" height="1" fill="#c06080"/><rect x="3" y="7" width="10" height="1" fill="#e8a880"/><rect x="13" y="7" width="1" height="1" fill="#c06080"/><rect x="3" y="8" width="1" height="1" fill="#c07858"/><rect x="4" y="8" width="8" height="1" fill="#e8a880"/><rect x="12" y="8" width="1" height="1" fill="#c07858"/><rect x="2" y="9" width="1" height="1" fill="#e8a880"/><rect x="3" y="9" width="2" height="1" fill="#f4f4f4"/><rect x="5" y="9" width="6" height="1" fill="#5080e0"/><rect x="11" y="9" width="2" height="1" fill="#f4f4f4"/><rect x="13" y="9" width="1" height="1" fill="#e8a880"/><rect x="2" y="10" width="2" height="1" fill="#e8a880"/><rect x="4" y="10" width="2" height="1" fill="#f4f4f4"/><rect x="6" y="10" width="4" height="1" fill="#5080e0"/><rect x="10" y="10" width="2" height="1" fill="#f4f4f4"/><rect x="12" y="10" width="2" height="1" fill="#e8a880"/><rect x="4" y="11" width="8" height="1" fill="#5080e0"/><rect x="3" y="12" width="1" height="1" fill="#5080e0"/><rect x="4" y="12" width="1" height="1" fill="#f4f4f4"/><rect x="5" y="12" width="6" height="1" fill="#5080e0"/><rect x="11" y="12" width="1" height="1" fill="#f4f4f4"/><rect x="12" y="12" width="1" height="1" fill="#5080e0"/><rect x="3" y="13" width="1" height="1" fill="#202030"/><rect x="4" y="13" width="8" height="1" fill="#5080e0"/><rect x="12" y="13" width="1" height="1" fill="#202030"/><rect x="4" y="14" width="2" height="1" fill="#202030"/><rect x="10" y="14" width="2" height="1" fill="#202030"/></svg>
<svg style="position:absolute;left:402px;top:570px" width="8" height="16" viewBox="0 0 8 16" shape-rendering="crispEdges"><rect x="0" y="0" width="8" height="16" fill="#6dbf98"/><rect x="2" y="5" width="4" height="1" fill="#e8d060"/><rect x="1" y="6" width="2" height="1" fill="#e8d060"/><rect x="3" y="6" width="2" height="1" fill="#a89040"/><rect x="5" y="6" width="2" height="1" fill="#e8d060"/><rect x="1" y="7" width="1" height="1" fill="#e8d060"/><rect x="2" y="7" width="4" height="1" fill="#e8a880"/><rect x="6" y="7" width="1" height="1" fill="#e8d060"/><rect x="1" y="8" width="1" height="1" fill="#e8a880"/><rect x="2" y="8" width="1" height="1" fill="#202030"/><rect x="3" y="8" width="2" height="1" fill="#e8a880"/><rect x="5" y="8" width="1" height="1" fill="#202030"/><rect x="6" y="8" width="1" height="1" fill="#e8a880"/><rect x="2" y="9" width="4" height="1" fill="#e8a880"/><rect x="1" y="10" width="6" height="1" fill="#6050a0"/><rect x="0" y="11" width="1" height="1" fill="#e8a880"/><rect x="1" y="11" width="6" height="1" fill="#6050a0"/><rect x="7" y="11" width="1" height="1" fill="#e8a880"/><rect x="1" y="12" width="6" height="1" fill="#6050a0"/><rect x="1" y="13" width="2" height="1" fill="#805040"/><rect x="5" y="13" width="2" height="1" fill="#805040"/><rect x="1" y="14" width="2" height="1" fill="#202030"/><rect x="5" y="14" width="2" height="1" fill="#202030"/></svg>
<div style="position:absolute;left:402px;top:590px;width:16px;height:9px;overflow:hidden">
<svg style="position:absolute;left:0;top:0" width="8" height="16" viewBox="0 0 8 16" shape-rendering="crispEdges"><rect x="0" y="0" width="8" height="16" fill="#6dbf98"/><rect x="2" y="5" width="4" height="1" fill="#e8d060"/><rect x="1" y="6" width="2" height="1" fill="#e8d060"/><rect x="3" y="6" width="2" height="1" fill="#a89040"/><rect x="5" y="6" width="2" height="1" fill="#e8d060"/><rect x="1" y="7" width="1" height="1" fill="#e8d060"/><rect x="2" y="7" width="4" height="1" fill="#e8a880"/><rect x="6" y="7" width="1" height="1" fill="#e8d060"/><rect x="1" y="8" width="1" height="1" fill="#e8a880"/><rect x="2" y="8" width="1" height="1" fill="#202030"/><rect x="3" y="8" width="2" height="1" fill="#e8a880"/><rect x="5" y="8" width="1" height="1" fill="#202030"/><rect x="6" y="8" width="1" height="1" fill="#e8a880"/><rect x="2" y="9" width="4" height="1" fill="#e8a880"/><rect x="1" y="10" width="6" height="1" fill="#6050a0"/><rect x="0" y="11" width="1" height="1" fill="#e8a880"/><rect x="1" y="11" width="6" height="1" fill="#6050a0"/><rect x="7" y="11" width="1" height="1" fill="#e8a880"/><rect x="1" y="12" width="6" height="1" fill="#6050a0"/><rect x="1" y="13" width="2" height="1" fill="#805040"/><rect x="5" y="13" width="2" height="1" fill="#805040"/><rect x="1" y="14" width="2" height="1" fill="#202030"/><rect x="5" y="14" width="2" height="1" fill="#202030"/></svg>
</div>
<div style="position:absolute;left:540px;top:168px;width:16px;height:431px;background:#f0f0f0"></div>
<svg style="position:absolute;left:543px;top:172px;" width="10" height="9" viewBox="0 0 10 9"><path d="M1.5 7 L5 3.5 L8.5 7" stroke="#606060" stroke-width="2" fill="none"/></svg>
<div style="position:absolute;left:540px;top:185px;width:15px;height:51px;background:#cdcdcd"></div>
<svg style="position:absolute;left:543px;top:587px;" width="10" height="9" viewBox="0 0 10 9"><path d="M1.3 1.5 L4.8 5.3 L8.3 1.5" stroke="#505050" stroke-width="2" fill="none"/></svg>
<div style="position:absolute;left:257px;top:609px;height:16px;line-height:16px;white-space:nowrap;font-size:11px;color:#000">ROM:</div>
<div style="position:absolute;left:290px;top:609px;width:143px;height:16px;line-height:16px;white-space:nowrap;overflow:hidden;letter-spacing:-0.25px;font-size:11px;color:#000">Pokemon - BurningRed(USA).gba</div>
<div style="position:absolute;left:444px;top:609px;height:16px;line-height:16px;white-space:nowrap;font-size:11px;color:#000">Profile:</div>
<div style="position:absolute;left:488px;top:606px;width:69px;height:20px;line-height:18px;padding-left:3px;font-size:11px;background:#e5e5e5;border:1px solid #acacac;color:#000">BPRE</div>
<svg style="position:absolute;left:542px;top:613px;" width="10" height="6" viewBox="0 0 10 6"><path d="M1 1 L5 5 L9 1" stroke="#333" fill="none"/></svg>
<div style="position:absolute;left:587px;top:132px;width:241px;height:264px;border:1px solid #dcdcdc"></div>
<div style="position:absolute;left:593px;top:125px;height:16px;line-height:16px;padding:0 2px;background:#f0f0f0;white-space:nowrap;font-size:11px;color:#000">OverWorld Menu</div>
<div style="position:absolute;left:609px;top:168px;width:95px;height:21px;line-height:20px;text-align:center;font-size:11px;background:#e1e1e1;border:1px solid #adadad;color:#000">Add</div>
<div style="position:absolute;left:712px;top:168px;width:94px;height:21px;line-height:20px;text-align:center;font-size:11px;background:#e1e1e1;border:1px solid #adadad;color:#000">Insert</div>
<div style="position:absolute;left:609px;top:197px;width:95px;height:21px;line-height:20px;text-align:center;font-size:11px;background:#cccccc;border:1px solid #bfbfbf;color:#838383">Resize</div>
<div style="position:absolute;left:712px;top:197px;width:94px;height:21px;line-height:20px;text-align:center;font-size:11px;background:#cccccc;border:1px solid #bfbfbf;color:#838383">Remove</div>
<div style="position:absolute;left:607px;top:228px;height:16px;line-height:16px;white-space:nowrap;font-size:11px;color:#000">Type:</div>
<div style="position:absolute;left:607px;top:254px;height:16px;line-height:16px;white-space:nowrap;font-size:11px;color:#000">Frames:</div>
<div style="position:absolute;left:607px;top:280px;height:16px;line-height:16px;white-space:nowrap;font-size:11px;color:#000">Pointer Address:</div>
<div style="position:absolute;left:607px;top:306px;height:16px;line-height:16px;white-space:nowrap;font-size:11px;color:#000">Data Address:</div>
<div style="position:absolute;left:607px;top:333px;height:16px;line-height:16px;white-space:nowrap;font-size:11px;color:#000">Frames Pointers:</div>
<div style="position:absolute;left:607px;top:359px;height:16px;line-height:16px;white-space:nowrap;font-size:11px;color:#000">Frames Address:</div>
<div style="position:absolute;left:587px;top:412px;width:241px;height:233px;border:1px solid #dcdcdc"></div>
<div style="position:absolute;left:593px;top:405px;height:16px;line-height:16px;padding:0 2px;background:#f0f0f0;white-space:nowrap;font-size:11px;color:#000">Tables Menu</div>
<div style="position:absolute;left:609px;top:448px;width:95px;height:21px;line-height:20px;text-align:center;font-size:11px;background:#cccccc;border:1px solid #bfbfbf;color:#838383">Add</div>
<div style="position:absolute;left:712px;top:448px;width:94px;height:21px;line-height:20px;text-align:center;font-size:11px;background:#cccccc;border:1px solid #bfbfbf;color:#838383">Remove</div>
<div style="position:absolute;left:607px;top:481px;height:16px;line-height:16px;white-space:nowrap;font-size:11px;color:#000">Table Address:</div>
<div style="position:absolute;left:710px;top:481px;height:16px;line-height:16px;white-space:nowrap;font-size:11px;color:#000">0x5F2F4</div>
<div style="position:absolute;left:607px;top:512px;height:16px;line-height:16px;white-space:nowrap;font-size:11px;color:#000">Pointers Address:</div>
<div style="position:absolute;left:710px;top:512px;height:16px;line-height:16px;white-space:nowrap;font-size:11px;color:#000">0x4623EC</div>
<div style="position:absolute;left:607px;top:544px;height:16px;line-height:16px;white-space:nowrap;font-size:11px;color:#000">Data Address:</div>
<div style="position:absolute;left:710px;top:544px;height:16px;line-height:16px;white-space:nowrap;font-size:11px;color:#000">0x814E8C</div>
<div style="position:absolute;left:607px;top:575px;height:16px;line-height:16px;white-space:nowrap;font-size:11px;color:#000">Frames Pointers:</div>
<div style="position:absolute;left:710px;top:575px;height:16px;line-height:16px;white-space:nowrap;font-size:11px;color:#000">0x817290</div>
<div style="position:absolute;left:607px;top:606px;height:16px;line-height:16px;white-space:nowrap;font-size:11px;color:#000">Frames Address:</div>
<div style="position:absolute;left:710px;top:606px;height:16px;line-height:16px;white-space:nowrap;font-size:11px;color:#000">0x81BA94</div>
<div style="position:absolute;left:837px;top:132px;width:271px;height:264px;border:1px solid #dcdcdc"></div>
<div style="position:absolute;left:843px;top:125px;height:16px;line-height:16px;padding:0 2px;background:#f0f0f0;white-space:nowrap;font-size:11px;color:#000">Sprite View</div>
<div style="position:absolute;left:857px;top:167px;width:229px;height:183px;background:#fff;border:1px solid #828790"></div>
<div style="position:absolute;left:935px;top:356px;width:73px;height:20px;background:#fff;border:1px solid #7a7a7a"></div>
<div style="position:absolute;left:938px;top:359px;height:16px;line-height:16px;white-space:nowrap;font-size:11px;color:#000">0</div>
<div style="position:absolute;left:990px;top:357px;width:17px;height:18px;background:#f0f0f0;border-left:1px solid #c0c0c0"></div>
<div style="position:absolute;left:991px;top:366px;width:16px;height:1px;background:#c0c0c0"></div>
<svg style="position:absolute;left:994px;top:359px;" width="9" height="5" viewBox="0 0 9 5"><path d="M0.5 4.5 L4.5 0.5 L8.5 4.5 Z" fill="#000"/></svg>
<svg style="position:absolute;left:994px;top:368px;" width="9" height="5" viewBox="0 0 9 5"><path d="M0.5 0.5 L4.5 4.5 L8.5 0.5 Z" fill="#000"/></svg>
<div style="position:absolute;left:837px;top:412px;width:281px;height:233px;border:1px solid #dcdcdc"></div>
<div style="position:absolute;left:843px;top:405px;height:16px;line-height:16px;padding:0 2px;background:#f0f0f0;white-space:nowrap;font-size:11px;color:#000">Palette Info</div>
<div style="position:absolute;left:857px;top:450px;height:16px;line-height:16px;white-space:nowrap;font-size:11px;color:#000">Text Color:</div>
<div style="position:absolute;left:857px;top:476px;height:16px;line-height:16px;white-space:nowrap;font-size:11px;color:#000">Palette ID:</div>
<div style="position:absolute;left:857px;top:502px;height:16px;line-height:16px;white-space:nowrap;font-size:11px;color:#000">Palette Slot</div>
<div style="position:absolute;left:857px;top:529px;height:16px;line-height:16px;white-space:nowrap;font-size:11px;color:#000">Palette Address:</div>
<div style="position:absolute;left:857px;top:556px;height:16px;line-height:16px;white-space:nowrap;font-size:11px;color:#000">Palette Table Address:</div>
<div style="position:absolute;left:857px;top:583px;height:16px;line-height:16px;white-space:nowrap;font-size:11px;color:#000">Used Palettes:</div>
<div style="position:absolute;left:857px;top:611px;height:16px;line-height:16px;white-space:nowrap;font-size:11px;color:#000">Available Palettes:</div>
<div style="position:absolute;left:981px;top:447px;width:117px;height:20px;line-height:18px;padding-left:3px;font-size:11px;background:#cccccc;border:1px solid #bfbfbf;color:#838383">Blue</div>
<svg style="position:absolute;left:1083px;top:454px;" width="10" height="6" viewBox="0 0 10 6"><path d="M1 1 L5 5 L9 1" stroke="#a0a0a0" fill="none"/></svg>
<div style="position:absolute;left:981px;top:474px;width:117px;height:20px;line-height:18px;padding-left:3px;font-size:11px;background:#cccccc;border:1px solid #bfbfbf;color:#838383">0x1103</div>
<svg style="position:absolute;left:1083px;top:481px;" width="10" height="6" viewBox="0 0 10 6"><path d="M1 1 L5 5 L9 1" stroke="#a0a0a0" fill="none"/></svg>
<div style="position:absolute;left:981px;top:500px;width:117px;height:19px;line-height:17px;padding-left:3px;font-size:11px;background:#cccccc;border:1px solid #bfbfbf;color:#838383">0x0</div>
<svg style="position:absolute;left:1083px;top:506px;" width="10" height="6" viewBox="0 0 10 6"><path d="M1 1 L5 5 L9 1" stroke="#a0a0a0" fill="none"/></svg>
<div style="position:absolute;left:981px;top:556px;height:16px;line-height:16px;white-space:nowrap;font-size:11px;color:#000">0x35BB68</div>
<div style="position:absolute;left:981px;top:583px;height:16px;line-height:16px;white-space:nowrap;font-size:11px;color:#000">18</div>
<div style="position:absolute;left:981px;top:611px;height:16px;line-height:16px;white-space:nowrap;font-size:11px;color:#000">256</div>
<div style="position:absolute;left:1135px;top:664px;width:2px;height:2px;background:#b8b8b8"></div>
<div style="position:absolute;left:1132px;top:667px;width:2px;height:2px;background:#b8b8b8"></div>
<div style="position:absolute;left:1135px;top:667px;width:2px;height:2px;background:#b8b8b8"></div>
<div style="position:absolute;left:1129px;top:670px;width:2px;height:2px;background:#b8b8b8"></div>
<div style="position:absolute;left:1132px;top:670px;width:2px;height:2px;background:#b8b8b8"></div>
<div style="position:absolute;left:1135px;top:670px;width:2px;height:2px;background:#b8b8b8"></div>
</body></html>
